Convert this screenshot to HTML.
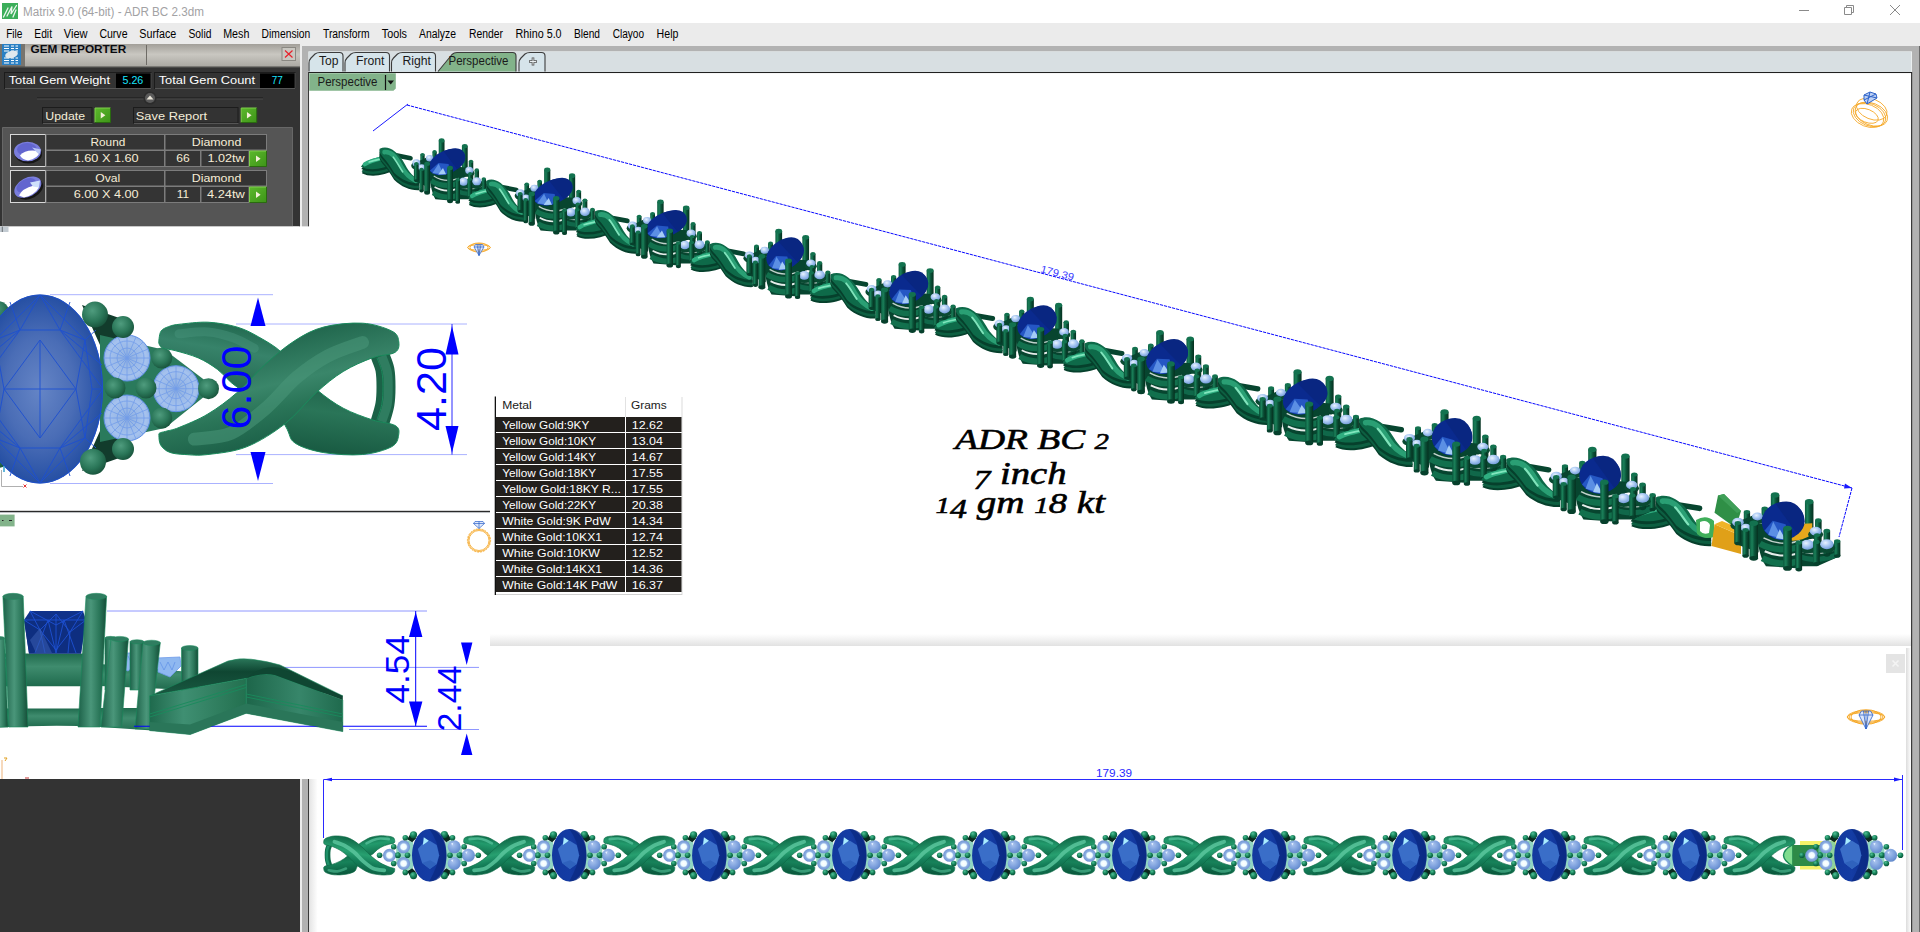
<!DOCTYPE html>
<html lang="en"><head><meta charset="utf-8"><title>Matrix 9.0 (64-bit) - ADR BC 2.3dm</title>
<style>html,body{margin:0;padding:0;background:#fff;overflow:hidden}body{width:1920px;height:932px;font-family:"Liberation Sans",sans-serif}svg{display:block}text{white-space:pre}</style></head><body>
<svg width="1920" height="932" viewBox="0 0 1920 932">
<defs>
<linearGradient id="hdr" x1="0" y1="0" x2="0" y2="1">
 <stop offset="0" stop-color="#a29f99"/><stop offset=".45" stop-color="#c9c7c1"/><stop offset="1" stop-color="#a9a7a1"/>
</linearGradient>
<linearGradient id="gbtn" x1="0" y1="0" x2="1" y2="1">
 <stop offset="0" stop-color="#5cb82c"/><stop offset="1" stop-color="#3d9418"/>
</linearGradient>

<linearGradient id="cyl" x1="0" y1="0" x2="1" y2="0">
 <stop offset="0" stop-color="#0b5a3e"/><stop offset=".3" stop-color="#1b8059"/><stop offset=".6" stop-color="#0a5238"/><stop offset="1" stop-color="#05301f"/>
</linearGradient>
<linearGradient id="band" x1="0" y1="0" x2="0" y2="1">
 <stop offset="0" stop-color="#0b5a3c"/><stop offset=".3" stop-color="#3aa67c"/><stop offset=".6" stop-color="#12704d"/><stop offset="1" stop-color="#08422c"/>
</linearGradient>
<radialGradient id="sst" cx=".4" cy=".35" r=".7">
 <stop offset="0" stop-color="#e8f2ff"/><stop offset=".5" stop-color="#a6c6f2"/><stop offset="1" stop-color="#6f97d6"/>
</radialGradient>
<radialGradient id="sstR" cx=".4" cy=".35" r=".7">
 <stop offset="0" stop-color="#a9c3ee"/><stop offset=".6" stop-color="#7b9fdc"/><stop offset="1" stop-color="#5f86c8"/>
</radialGradient>
<radialGradient id="sstL" cx=".5" cy=".5" r=".5">
 <stop offset="0" stop-color="#ffffff"/><stop offset=".42" stop-color="#eefcff"/><stop offset=".62" stop-color="#8fb0e4"/><stop offset="1" stop-color="#6f94d2"/>
</radialGradient>
<radialGradient id="ball" cx=".38" cy=".32" r=".7">
 <stop offset="0" stop-color="#4fc097"/><stop offset=".55" stop-color="#168058"/><stop offset="1" stop-color="#075236"/>
</radialGradient>
<linearGradient id="ovalT" x1="0" y1="0" x2="1" y2="0">
 <stop offset="0" stop-color="#12389e"/><stop offset=".5" stop-color="#143ca4"/><stop offset="1" stop-color="#0e3090"/>
</linearGradient>

<radialGradient id="bigoval" cx=".5" cy=".5" r=".62">
 <stop offset="0" stop-color="#6585c6"/><stop offset=".45" stop-color="#4a6db6"/><stop offset=".8" stop-color="#2650a4"/><stop offset="1" stop-color="#163f98"/>
</radialGradient>
<radialGradient id="dball" cx=".4" cy=".35" r=".75">
 <stop offset="0" stop-color="#4f9c7e"/><stop offset=".55" stop-color="#2a7658"/><stop offset="1" stop-color="#134a34"/>
</radialGradient>
<radialGradient id="dsst" cx=".5" cy=".5" r=".6">
 <stop offset="0" stop-color="#8fb0e0"/><stop offset=".7" stop-color="#a5c2ee"/><stop offset="1" stop-color="#86a8e0"/>
</radialGradient>
<linearGradient id="dband" x1="0" y1="0" x2="0" y2="1">
 <stop offset="0" stop-color="#1f6a4d"/><stop offset=".35" stop-color="#4b967a"/><stop offset=".7" stop-color="#2a7659"/><stop offset="1" stop-color="#175840"/>
</linearGradient>
<linearGradient id="dcyl" x1="0" y1="0" x2="1" y2="0">
 <stop offset="0" stop-color="#1c6148"/><stop offset=".45" stop-color="#4a967a"/><stop offset=".75" stop-color="#2a7659"/><stop offset="1" stop-color="#154c37"/>
</linearGradient>
<linearGradient id="dbar" x1="0" y1="0" x2="0" y2="1">
 <stop offset="0" stop-color="#1f6a4d"/><stop offset=".4" stop-color="#3f8c6e"/><stop offset="1" stop-color="#1f6a4d"/>
</linearGradient>
<linearGradient id="dband2" x1=".35" y1=".1" x2=".7" y2=".95">
 <stop offset="0" stop-color="#1d6249"/><stop offset=".42" stop-color="#3a866a"/><stop offset=".6" stop-color="#2a7558"/><stop offset="1" stop-color="#155640"/>
</linearGradient>
<linearGradient id="dbandA" x1=".6" y1="0" x2=".3" y2="1">
 <stop offset="0" stop-color="#1f664c"/><stop offset=".35" stop-color="#37836a"/><stop offset="1" stop-color="#1a5c44"/>
</linearGradient>
<linearGradient id="dbandB" x1=".6" y1="0" x2=".4" y2="1">
 <stop offset="0" stop-color="#1a5a43"/><stop offset=".5" stop-color="#2a7558"/><stop offset="1" stop-color="#175840"/>
</linearGradient>
<linearGradient id="vband2" x1=".35" y1=".1" x2=".7" y2=".95">
 <stop offset="0" stop-color="#0c5f40"/><stop offset=".42" stop-color="#27a070"/><stop offset=".6" stop-color="#15805a"/><stop offset="1" stop-color="#085238"/>
</linearGradient>
<linearGradient id="vbandA" x1=".6" y1="0" x2=".3" y2="1">
 <stop offset="0" stop-color="#0e6645"/><stop offset=".35" stop-color="#229a6c"/><stop offset="1" stop-color="#0a5a3c"/>
</linearGradient>
<linearGradient id="vbandB" x1=".6" y1="0" x2=".4" y2="1">
 <stop offset="0" stop-color="#0a5a3c"/><stop offset=".5" stop-color="#17825a"/><stop offset="1" stop-color="#085238"/>
</linearGradient>
<linearGradient id="dtop" x1="0" y1="0" x2="0" y2="1">
 <stop offset="0" stop-color="#2a7659"/><stop offset=".35" stop-color="#0f4632"/><stop offset="1" stop-color="#1a5a42"/>
</linearGradient>
<linearGradient id="dfaceL" x1="0" y1="0" x2="1" y2="0">
 <stop offset="0" stop-color="#1f6a4d"/><stop offset=".35" stop-color="#3f8f72"/><stop offset="1" stop-color="#23704f"/>
</linearGradient>
<linearGradient id="dfaceR" x1="0" y1="0" x2="1" y2="0">
 <stop offset="0" stop-color="#1d664a"/><stop offset=".55" stop-color="#37866a"/><stop offset="1" stop-color="#1f6a4d"/>
</linearGradient>
<linearGradient id="dlink" x1="0" y1="0" x2="1" y2="1">
 <stop offset="0" stop-color="#124a35"/><stop offset=".5" stop-color="#3a8a6c"/><stop offset="1" stop-color="#1f6a4d"/>
</linearGradient>

<g id="xring"><path d="M379.9 355.1 C380.7 357.5 383.9 364.2 384.9 369.5 C385.9 374.9 386.0 381.1 386.0 386.9 C386.0 392.7 385.9 398.4 384.9 404.3 C383.9 410.3 380.7 419.6 379.9 422.7" stroke="#1b6247" stroke-width="19" fill="none"/><path d="M381.8 356.0 C382.7 358.6 386.1 366.3 387.2 371.5 C388.3 376.6 388.2 381.5 388.2 386.9 C388.2 392.4 388.3 398.5 387.2 404.3 C386.1 410.1 382.7 418.8 381.8 421.7" stroke="#2f7d60" stroke-width="9" fill="none"/><path d="M377.0 357.9 C377.8 360.2 380.8 366.6 381.8 371.5 C382.8 376.3 383.0 381.5 383.0 386.9 C383.0 392.4 382.8 398.8 381.8 404.3 C380.8 409.8 377.8 417.2 377.0 419.8" stroke="#1a8a5c" stroke-width="1" fill="none"/></g><g id="xlink"><path d="M159.1 338.6 C159.4 336.4 159.7 332.9 161.2 330.9 C162.7 328.9 165.4 327.8 168.4 326.7 C171.3 325.6 172.4 325.1 179.0 324.3 C185.6 323.6 198.3 321.8 207.9 322.2 C217.6 322.7 228.6 324.6 236.9 327.0 C245.3 329.5 250.8 332.5 258.2 336.7 C265.6 340.9 274.9 346.0 281.4 352.2 C287.8 358.3 299.4 365.4 296.8 373.4 C294.2 381.5 275.9 398.2 265.9 400.4 C255.9 402.7 245.0 392.1 236.9 386.9 C228.9 381.8 224.0 374.4 217.6 369.5 C211.2 364.7 205.4 361.1 198.3 357.9 C191.2 354.8 180.9 352.2 175.1 350.6 C169.3 349.0 166.2 349.3 163.5 348.3 C160.9 347.3 160.0 346.0 159.3 344.4 C158.5 342.8 158.8 340.9 159.1 338.6 Z" fill="url(#dbandA)" stroke="#1a8a5c" stroke-width="1"/><path d="M258.2 381.1 C256.2 390.5 279.1 415.3 285.2 425.6 C291.3 435.9 288.4 438.4 294.9 442.9 C301.3 447.4 312.6 450.7 323.8 452.6 C335.1 454.5 351.2 455.5 362.5 454.5 C373.7 453.6 385.4 450.0 391.5 446.8 C397.5 443.6 398.0 438.8 398.6 435.2 C399.2 431.7 399.7 428.1 395.3 425.6 C390.9 423.0 380.8 422.7 372.1 419.8 C363.4 416.9 352.2 413.0 343.2 408.2 C334.1 403.3 325.8 397.2 318.1 390.8 C310.3 384.3 306.8 371.1 296.8 369.5 C286.8 367.9 260.1 371.8 258.2 381.1 Z" fill="url(#dbandB)" stroke="#1a8a5c" stroke-width="1"/><path d="M158.9 435.2 C159.0 437.2 158.9 442.0 160.6 444.9 C162.4 447.7 165.3 450.6 169.3 452.2 C173.3 453.8 178.3 454.1 184.8 454.5 C191.2 454.9 197.6 455.8 207.9 454.5 C218.3 453.2 233.7 452.0 246.6 446.8 C259.5 441.7 273.6 432.6 285.2 423.6 C296.8 414.6 306.5 401.4 316.1 392.7 C325.8 384.0 333.8 377.3 343.2 371.5 C352.5 365.7 363.4 361.2 372.1 357.9 C380.8 354.7 390.9 355.1 395.3 352.2 C399.7 349.3 399.2 344.1 398.6 340.6 C398.0 337.0 397.5 333.8 391.5 330.9 C385.4 328.0 373.7 323.8 362.5 323.2 C351.2 322.5 335.1 324.1 323.8 327.0 C312.6 329.9 304.5 334.4 294.9 340.6 C285.2 346.7 275.6 355.1 265.9 363.7 C256.2 372.4 246.6 384.3 236.9 392.7 C227.3 401.1 217.6 408.2 207.9 414.0 C198.3 419.8 186.1 424.6 179.0 427.5 C171.9 430.4 168.6 430.4 165.5 431.4 C162.3 432.3 161.1 432.3 160.0 432.9 C158.9 433.5 158.8 433.2 158.9 435.2 Z" fill="url(#dband2)" stroke="#1a8a5c" stroke-width="1"/><path d="M194.4 439.1 C200.5 438.1 219.2 438.4 231.1 433.3 C243.0 428.1 255.0 417.5 265.9 408.2 C276.8 398.8 286.5 386.0 296.8 377.3 C307.1 368.6 316.8 361.8 327.7 356.0 C338.7 350.2 356.7 344.7 362.5 342.5" stroke="#4a977a" stroke-width="13" fill="none" stroke-linecap="round" opacity="0.55"/><path d="M179.0 333.8 C183.8 333.5 198.9 331.2 207.9 331.9 C217.0 332.5 225.3 334.9 233.1 337.7 C240.8 340.4 250.8 346.5 254.3 348.3" stroke="#46917a" stroke-width="9" fill="none" stroke-linecap="round" opacity="0.5"/></g><g id="vring"><path d="M379.9 355.1 C380.7 357.5 383.9 364.2 384.9 369.5 C385.9 374.9 386.0 381.1 386.0 386.9 C386.0 392.7 385.9 398.4 384.9 404.3 C383.9 410.3 380.7 419.6 379.9 422.7" stroke="#0e6a48" stroke-width="19" fill="none"/><path d="M381.8 356.0 C382.7 358.6 386.1 366.3 387.2 371.5 C388.3 376.6 388.2 381.5 388.2 386.9 C388.2 392.4 388.3 398.5 387.2 404.3 C386.1 410.1 382.7 418.8 381.8 421.7" stroke="#1f9068" stroke-width="9" fill="none"/><path d="M377.0 357.9 C377.8 360.2 380.8 366.6 381.8 371.5 C382.8 376.3 383.0 381.5 383.0 386.9 C383.0 392.4 382.8 398.8 381.8 404.3 C380.8 409.8 377.8 417.2 377.0 419.8" stroke="#0c6a46" stroke-width="1" fill="none"/></g><g id="vlink"><path d="M159.1 338.6 C159.4 336.4 159.7 332.9 161.2 330.9 C162.7 328.9 165.4 327.8 168.4 326.7 C171.3 325.6 172.4 325.1 179.0 324.3 C185.6 323.6 198.3 321.8 207.9 322.2 C217.6 322.7 228.6 324.6 236.9 327.0 C245.3 329.5 250.8 332.5 258.2 336.7 C265.6 340.9 274.9 346.0 281.4 352.2 C287.8 358.3 299.4 365.4 296.8 373.4 C294.2 381.5 275.9 398.2 265.9 400.4 C255.9 402.7 245.0 392.1 236.9 386.9 C228.9 381.8 224.0 374.4 217.6 369.5 C211.2 364.7 205.4 361.1 198.3 357.9 C191.2 354.8 180.9 352.2 175.1 350.6 C169.3 349.0 166.2 349.3 163.5 348.3 C160.9 347.3 160.0 346.0 159.3 344.4 C158.5 342.8 158.8 340.9 159.1 338.6 Z" fill="url(#vbandA)" stroke="#0c6a46" stroke-width="2.2"/><path d="M258.2 381.1 C256.2 390.5 279.1 415.3 285.2 425.6 C291.3 435.9 288.4 438.4 294.9 442.9 C301.3 447.4 312.6 450.7 323.8 452.6 C335.1 454.5 351.2 455.5 362.5 454.5 C373.7 453.6 385.4 450.0 391.5 446.8 C397.5 443.6 398.0 438.8 398.6 435.2 C399.2 431.7 399.7 428.1 395.3 425.6 C390.9 423.0 380.8 422.7 372.1 419.8 C363.4 416.9 352.2 413.0 343.2 408.2 C334.1 403.3 325.8 397.2 318.1 390.8 C310.3 384.3 306.8 371.1 296.8 369.5 C286.8 367.9 260.1 371.8 258.2 381.1 Z" fill="url(#vbandB)" stroke="#0c6a46" stroke-width="2.2"/><path d="M158.9 435.2 C159.0 437.2 158.9 442.0 160.6 444.9 C162.4 447.7 165.3 450.6 169.3 452.2 C173.3 453.8 178.3 454.1 184.8 454.5 C191.2 454.9 197.6 455.8 207.9 454.5 C218.3 453.2 233.7 452.0 246.6 446.8 C259.5 441.7 273.6 432.6 285.2 423.6 C296.8 414.6 306.5 401.4 316.1 392.7 C325.8 384.0 333.8 377.3 343.2 371.5 C352.5 365.7 363.4 361.2 372.1 357.9 C380.8 354.7 390.9 355.1 395.3 352.2 C399.7 349.3 399.2 344.1 398.6 340.6 C398.0 337.0 397.5 333.8 391.5 330.9 C385.4 328.0 373.7 323.8 362.5 323.2 C351.2 322.5 335.1 324.1 323.8 327.0 C312.6 329.9 304.5 334.4 294.9 340.6 C285.2 346.7 275.6 355.1 265.9 363.7 C256.2 372.4 246.6 384.3 236.9 392.7 C227.3 401.1 217.6 408.2 207.9 414.0 C198.3 419.8 186.1 424.6 179.0 427.5 C171.9 430.4 168.6 430.4 165.5 431.4 C162.3 432.3 161.1 432.3 160.0 432.9 C158.9 433.5 158.8 433.2 158.9 435.2 Z" fill="url(#vband2)" stroke="#0c6a46" stroke-width="2.2"/><path d="M194.4 439.1 C200.5 438.1 219.2 438.4 231.1 433.3 C243.0 428.1 255.0 417.5 265.9 408.2 C276.8 398.8 286.5 386.0 296.8 377.3 C307.1 368.6 316.8 361.8 327.7 356.0 C338.7 350.2 356.7 344.7 362.5 342.5" stroke="#5ec8a0" stroke-width="13" fill="none" stroke-linecap="round" opacity="0.8"/><path d="M179.0 333.8 C183.8 333.5 198.9 331.2 207.9 331.9 C217.0 332.5 225.3 334.9 233.1 337.7 C240.8 340.4 250.8 346.5 254.3 348.3" stroke="#54bf98" stroke-width="9" fill="none" stroke-linecap="round" opacity="0.8"/><path d="M323.8 433.3 C328.7 434.9 343.2 442.0 352.8 442.9 C362.5 443.9 377.0 439.7 381.8 439.1" stroke="#54bf98" stroke-width="9" fill="none" stroke-linecap="round" opacity=".6"/></g><g id="plink"><path d="M64 26.5 L84 30" stroke="#07452f" stroke-width="5" fill="none" stroke-linecap="round"/><path d="M25.5 39 C29 32 45 29 62 25.5 L66 35 C52 41.5 36 44 25.5 39 Z" transform="translate(1 7)" fill="#06402c"/><path d="M25.5 39 C29 32 45 29 62 25.5 L66 35 C52 41.5 36 44 25.5 39 Z" transform="translate(.8 5.2)" fill="#0d5f41"/><path d="M25.5 39 C29 32 45 29 62 25.5 L66 35 C52 41.5 36 44 25.5 39 Z" transform="translate(.4 2.6)" fill="#06402c"/><path d="M25.5 39 C29 32 45 29 62 25.5 L66 35 C52 41.5 36 44 25.5 39 Z" fill="#0e6a49"/><path d="M30 36.5 C36 32.5 48 30.5 60 28" stroke="#2fae80" stroke-width="4.6" fill="none" stroke-linecap="round"/><path d="M35 34 C41 32 49 30.8 56 29.2" stroke="#8ff0c8" stroke-width="1.7" fill="none" stroke-linecap="round" opacity=".85"/><path d="M47.5 20 C56 16 68 20.5 77.5 37 C82 45 88 50.5 94 53.5 L94 56.5 C84 57 73.5 53.5 64.5 45.5 C60 39 56 33 51 28.5 C47.5 25 46.5 22 47.5 20 Z" transform="translate(0 7.5)" fill="#06402c"/><path d="M47.5 20 C56 16 68 20.5 77.5 37 C82 45 88 50.5 94 53.5 L94 56.5 C84 57 73.5 53.5 64.5 45.5 C60 39 56 33 51 28.5 C47.5 25 46.5 22 47.5 20 Z" transform="translate(0 5.5)" fill="#0d5f41"/><path d="M47.5 20 C56 16 68 20.5 77.5 37 C82 45 88 50.5 94 53.5 L94 56.5 C84 57 73.5 53.5 64.5 45.5 C60 39 56 33 51 28.5 C47.5 25 46.5 22 47.5 20 Z" transform="translate(0 2.8)" fill="#06402c"/><path d="M47.5 20 C56 16 68 20.5 77.5 37 C82 45 88 50.5 94 53.5 L94 56.5 C84 57 73.5 53.5 64.5 45.5 C60 39 56 33 51 28.5 C47.5 25 46.5 22 47.5 20 Z" fill="#0e6a49"/><path d="M53 23.5 C61 22.5 66.5 28 72.5 38.5 C77 46 83 51 90 54" stroke="#2a9f74" stroke-width="5" fill="none" stroke-linecap="round"/><path d="M63.5 29 C67.5 33.5 70.5 39 74.5 44.5" stroke="#8ff0c8" stroke-width="1.9" fill="none" stroke-linecap="round" opacity=".85"/></g><g id="pstf"><rect x="-10.0" y="-23" width="7" height="27" fill="url(#cyl)"/><ellipse cx="-6.5" cy="4" rx="3.5" ry="2.1" fill="#06402c"/><ellipse cx="-6.5" cy="-23" rx="3.5" ry="2.3800000000000003" fill="#13724f"/><rect x="18.0" y="-17" width="7" height="31" fill="url(#cyl)"/><ellipse cx="21.5" cy="14" rx="3.5" ry="2.1" fill="#06402c"/><ellipse cx="21.5" cy="-17" rx="3.5" ry="2.3800000000000003" fill="#13724f"/><rect x="-32.2" y="-8" width="5.2" height="30" fill="url(#cyl)"/><ellipse cx="-29.6" cy="22" rx="2.6" ry="1.56" fill="#06402c"/><ellipse cx="-29.6" cy="-8" rx="2.6" ry="1.7680000000000002" fill="#13724f"/><rect x="-17.6" y="-11" width="5.2" height="17" fill="url(#cyl)"/><ellipse cx="-15" cy="6" rx="2.6" ry="1.56" fill="#06402c"/><ellipse cx="-15" cy="-11" rx="2.6" ry="1.7680000000000002" fill="#13724f"/><path d="M-40 2 L-20 -7 L-20 28 L-40 20 Z" fill="#07452f"/><ellipse cx="-21" cy="-1" rx="5.800000000000001" ry="3.74" fill="#0a4a32"/><ellipse cx="-21" cy="-4" rx="4.4" ry="3.5200000000000005" fill="url(#sst)"/><ellipse cx="-37" cy="4" rx="6.199999999999999" ry="4.08" fill="#0a4a32"/><ellipse cx="-37" cy="1" rx="4.8" ry="3.84" fill="url(#sst)"/><ellipse cx="-30.5" cy="9" rx="5.800000000000001" ry="3.74" fill="#0a4a32"/><ellipse cx="-30.5" cy="6" rx="4.4" ry="3.5200000000000005" fill="url(#sst)"/><rect x="-39.6" y="1.7" width="5.2" height="18.3" fill="url(#cyl)"/><ellipse cx="-37" cy="20" rx="2.6" ry="1.56" fill="#06402c"/><ellipse cx="-37" cy="1.7" rx="2.6" ry="1.7680000000000002" fill="#13724f"/><path d="M-22 2 Q-21 30 -14 40 L14 42 Q20 32 22 6 Z" fill="#07452f"/><path d="M-19 20 Q-4 29 17 22" stroke="#12704d" stroke-width="5.5" fill="none"/><path d="M-17 33 Q-2 41 15 35" stroke="#12704d" stroke-width="5.5" fill="none"/><path d="M-15 26.8 Q-2 33.5 13 28.5" stroke="#ffffff" stroke-width="1.8" fill="none" opacity=".9"/><path d="M-16 15 Q-2 23 14 17.5" stroke="#ffffff" stroke-width="1.4" fill="none" opacity=".75"/><g transform="rotate(-20) scale(1.122 0.855)"><ellipse cx="0" cy="0" rx="20.5" ry="14.5" fill="#0a2a8e"/><path d="M0 -14.5 Q20.5 -14.5 20.5 0 Q20.5 10 8 13.5 L4 0 Z" fill="#092681"/><path d="M-20.2 2 Q-14 14.3 -1 14.5 L1 3 L-9 -3 Z" fill="#2557c4"/><path d="M-18.5 6 L-9 -2 L-7.5 12.5 Z" fill="#5b8fe4"/><path d="M-13 10.5 L-6 5 L-5 14 Z" fill="#a4ccf6"/></g><rect x="-33.3" y="8" width="5.2" height="23" fill="url(#cyl)"/><ellipse cx="-30.7" cy="31" rx="2.6" ry="1.56" fill="#06402c"/><ellipse cx="-30.7" cy="8" rx="2.6" ry="1.7680000000000002" fill="#13724f"/><rect x="-27.5" y="2" width="7" height="31" fill="url(#cyl)"/><ellipse cx="-24" cy="33" rx="3.5" ry="2.1" fill="#06402c"/><ellipse cx="-24" cy="2" rx="3.5" ry="2.3800000000000003" fill="#13724f"/><rect x="0.20000000000000018" y="6.5" width="7" height="35.5" fill="url(#cyl)"/><ellipse cx="3.7" cy="42" rx="3.5" ry="2.1" fill="#06402c"/><ellipse cx="3.7" cy="6.5" rx="3.5" ry="2.3800000000000003" fill="#13724f"/><path d="M10 22 L46 20 L47 31 L28 40 L10 40 Z" fill="#07452f"/><path d="M12 31 Q28 38 46 29" stroke="#10684a" stroke-width="4.5" fill="none"/><path d="M12 25.5 Q28 33 46 24" stroke="#ffffff" stroke-width="1.2" fill="none" opacity=".55"/><rect x="26.3" y="-0.5" width="5.4" height="24.5" fill="url(#cyl)"/><ellipse cx="29" cy="24" rx="2.7" ry="1.62" fill="#06402c"/><ellipse cx="29" cy="-0.5" rx="2.7" ry="1.8360000000000003" fill="#13724f"/><rect x="33.3" y="8.6" width="5.4" height="21.4" fill="url(#cyl)"/><ellipse cx="36" cy="30" rx="2.7" ry="1.62" fill="#06402c"/><ellipse cx="36" cy="8.6" rx="2.7" ry="1.8360000000000003" fill="#13724f"/><ellipse cx="26.8" cy="12" rx="6.199999999999999" ry="4.08" fill="#0a4a32"/><ellipse cx="26.8" cy="9" rx="4.8" ry="3.84" fill="url(#sst)"/><rect x="25.5" y="12.5" width="5" height="17.5" fill="url(#cyl)"/><ellipse cx="28" cy="30" rx="2.5" ry="1.5" fill="#06402c"/><ellipse cx="28" cy="12.5" rx="2.5" ry="1.7000000000000002" fill="#13724f"/><rect x="41.9" y="18" width="5.2" height="13" fill="url(#cyl)"/><ellipse cx="44.5" cy="31" rx="2.6" ry="1.56" fill="#06402c"/><ellipse cx="44.5" cy="18" rx="2.6" ry="1.7680000000000002" fill="#13724f"/><ellipse cx="20" cy="24" rx="6.9" ry="4.675" fill="#0a4a32"/><ellipse cx="20" cy="21" rx="5.5" ry="4.4" fill="url(#sst)"/><ellipse cx="36" cy="23.6" rx="6.9" ry="4.675" fill="#0a4a32"/><ellipse cx="36" cy="20.6" rx="5.5" ry="4.4" fill="url(#sst)"/><rect x="10.3" y="19" width="5.4" height="24" fill="url(#cyl)"/><ellipse cx="13" cy="43" rx="2.7" ry="1.62" fill="#06402c"/><ellipse cx="13" cy="19" rx="2.7" ry="1.8360000000000003" fill="#13724f"/><rect x="24.7" y="18.5" width="5.4" height="19.5" fill="url(#cyl)"/><ellipse cx="27.4" cy="38" rx="2.7" ry="1.62" fill="#06402c"/><ellipse cx="27.4" cy="18.5" rx="2.7" ry="1.8360000000000003" fill="#13724f"/></g><g id="pstm"><rect x="-10.0" y="-23" width="7" height="27" fill="url(#cyl)"/><ellipse cx="-6.5" cy="4" rx="3.5" ry="2.1" fill="#06402c"/><ellipse cx="-6.5" cy="-23" rx="3.5" ry="2.3800000000000003" fill="#13724f"/><rect x="18.0" y="-17" width="7" height="31" fill="url(#cyl)"/><ellipse cx="21.5" cy="14" rx="3.5" ry="2.1" fill="#06402c"/><ellipse cx="21.5" cy="-17" rx="3.5" ry="2.3800000000000003" fill="#13724f"/><rect x="-32.2" y="-8" width="5.2" height="30" fill="url(#cyl)"/><ellipse cx="-29.6" cy="22" rx="2.6" ry="1.56" fill="#06402c"/><ellipse cx="-29.6" cy="-8" rx="2.6" ry="1.7680000000000002" fill="#13724f"/><rect x="-17.6" y="-11" width="5.2" height="17" fill="url(#cyl)"/><ellipse cx="-15" cy="6" rx="2.6" ry="1.56" fill="#06402c"/><ellipse cx="-15" cy="-11" rx="2.6" ry="1.7680000000000002" fill="#13724f"/><path d="M-40 2 L-20 -7 L-20 28 L-40 20 Z" fill="#07452f"/><ellipse cx="-21" cy="-1" rx="5.800000000000001" ry="3.74" fill="#0a4a32"/><ellipse cx="-21" cy="-4" rx="4.4" ry="3.5200000000000005" fill="url(#sst)"/><ellipse cx="-37" cy="4" rx="6.199999999999999" ry="4.08" fill="#0a4a32"/><ellipse cx="-37" cy="1" rx="4.8" ry="3.84" fill="url(#sst)"/><ellipse cx="-30.5" cy="9" rx="5.800000000000001" ry="3.74" fill="#0a4a32"/><ellipse cx="-30.5" cy="6" rx="4.4" ry="3.5200000000000005" fill="url(#sst)"/><rect x="-39.6" y="1.7" width="5.2" height="18.3" fill="url(#cyl)"/><ellipse cx="-37" cy="20" rx="2.6" ry="1.56" fill="#06402c"/><ellipse cx="-37" cy="1.7" rx="2.6" ry="1.7680000000000002" fill="#13724f"/><path d="M-22 2 Q-21 30 -14 40 L14 42 Q20 32 22 6 Z" fill="#07452f"/><path d="M-19 20 Q-4 29 17 22" stroke="#12704d" stroke-width="5.5" fill="none"/><path d="M-17 33 Q-2 41 15 35" stroke="#12704d" stroke-width="5.5" fill="none"/><path d="M-15 26.8 Q-2 33.5 13 28.5" stroke="#ffffff" stroke-width="1.8" fill="none" opacity=".9"/><path d="M-16 15 Q-2 23 14 17.5" stroke="#ffffff" stroke-width="1.4" fill="none" opacity=".75"/><g transform="rotate(-28) scale(1.000 1.000)"><ellipse cx="0" cy="0" rx="20.5" ry="14.5" fill="#0a2a8e"/><path d="M0 -14.5 Q20.5 -14.5 20.5 0 Q20.5 10 8 13.5 L4 0 Z" fill="#092681"/><path d="M-20.2 2 Q-14 14.3 -1 14.5 L1 3 L-9 -3 Z" fill="#2557c4"/><path d="M-18.5 6 L-9 -2 L-7.5 12.5 Z" fill="#5b8fe4"/><path d="M-13 10.5 L-6 5 L-5 14 Z" fill="#a4ccf6"/></g><rect x="-33.3" y="8" width="5.2" height="23" fill="url(#cyl)"/><ellipse cx="-30.7" cy="31" rx="2.6" ry="1.56" fill="#06402c"/><ellipse cx="-30.7" cy="8" rx="2.6" ry="1.7680000000000002" fill="#13724f"/><rect x="-27.5" y="2" width="7" height="31" fill="url(#cyl)"/><ellipse cx="-24" cy="33" rx="3.5" ry="2.1" fill="#06402c"/><ellipse cx="-24" cy="2" rx="3.5" ry="2.3800000000000003" fill="#13724f"/><rect x="0.20000000000000018" y="6.5" width="7" height="35.5" fill="url(#cyl)"/><ellipse cx="3.7" cy="42" rx="3.5" ry="2.1" fill="#06402c"/><ellipse cx="3.7" cy="6.5" rx="3.5" ry="2.3800000000000003" fill="#13724f"/><path d="M10 22 L46 20 L47 31 L28 40 L10 40 Z" fill="#07452f"/><path d="M12 31 Q28 38 46 29" stroke="#10684a" stroke-width="4.5" fill="none"/><path d="M12 25.5 Q28 33 46 24" stroke="#ffffff" stroke-width="1.2" fill="none" opacity=".55"/><rect x="26.3" y="-0.5" width="5.4" height="24.5" fill="url(#cyl)"/><ellipse cx="29" cy="24" rx="2.7" ry="1.62" fill="#06402c"/><ellipse cx="29" cy="-0.5" rx="2.7" ry="1.8360000000000003" fill="#13724f"/><rect x="33.3" y="8.6" width="5.4" height="21.4" fill="url(#cyl)"/><ellipse cx="36" cy="30" rx="2.7" ry="1.62" fill="#06402c"/><ellipse cx="36" cy="8.6" rx="2.7" ry="1.8360000000000003" fill="#13724f"/><ellipse cx="26.8" cy="12" rx="6.199999999999999" ry="4.08" fill="#0a4a32"/><ellipse cx="26.8" cy="9" rx="4.8" ry="3.84" fill="url(#sst)"/><rect x="25.5" y="12.5" width="5" height="17.5" fill="url(#cyl)"/><ellipse cx="28" cy="30" rx="2.5" ry="1.5" fill="#06402c"/><ellipse cx="28" cy="12.5" rx="2.5" ry="1.7000000000000002" fill="#13724f"/><rect x="41.9" y="18" width="5.2" height="13" fill="url(#cyl)"/><ellipse cx="44.5" cy="31" rx="2.6" ry="1.56" fill="#06402c"/><ellipse cx="44.5" cy="18" rx="2.6" ry="1.7680000000000002" fill="#13724f"/><ellipse cx="20" cy="24" rx="6.9" ry="4.675" fill="#0a4a32"/><ellipse cx="20" cy="21" rx="5.5" ry="4.4" fill="url(#sst)"/><ellipse cx="36" cy="23.6" rx="6.9" ry="4.675" fill="#0a4a32"/><ellipse cx="36" cy="20.6" rx="5.5" ry="4.4" fill="url(#sst)"/><rect x="10.3" y="19" width="5.4" height="24" fill="url(#cyl)"/><ellipse cx="13" cy="43" rx="2.7" ry="1.62" fill="#06402c"/><ellipse cx="13" cy="19" rx="2.7" ry="1.8360000000000003" fill="#13724f"/><rect x="24.7" y="18.5" width="5.4" height="19.5" fill="url(#cyl)"/><ellipse cx="27.4" cy="38" rx="2.7" ry="1.62" fill="#06402c"/><ellipse cx="27.4" cy="18.5" rx="2.7" ry="1.8360000000000003" fill="#13724f"/></g><g id="pstn"><rect x="-10.0" y="-23" width="7" height="27" fill="url(#cyl)"/><ellipse cx="-6.5" cy="4" rx="3.5" ry="2.1" fill="#06402c"/><ellipse cx="-6.5" cy="-23" rx="3.5" ry="2.3800000000000003" fill="#13724f"/><rect x="18.0" y="-17" width="7" height="31" fill="url(#cyl)"/><ellipse cx="21.5" cy="14" rx="3.5" ry="2.1" fill="#06402c"/><ellipse cx="21.5" cy="-17" rx="3.5" ry="2.3800000000000003" fill="#13724f"/><rect x="-32.2" y="-8" width="5.2" height="30" fill="url(#cyl)"/><ellipse cx="-29.6" cy="22" rx="2.6" ry="1.56" fill="#06402c"/><ellipse cx="-29.6" cy="-8" rx="2.6" ry="1.7680000000000002" fill="#13724f"/><rect x="-17.6" y="-11" width="5.2" height="17" fill="url(#cyl)"/><ellipse cx="-15" cy="6" rx="2.6" ry="1.56" fill="#06402c"/><ellipse cx="-15" cy="-11" rx="2.6" ry="1.7680000000000002" fill="#13724f"/><path d="M-40 2 L-20 -7 L-20 28 L-40 20 Z" fill="#07452f"/><ellipse cx="-21" cy="-1" rx="5.800000000000001" ry="3.74" fill="#0a4a32"/><ellipse cx="-21" cy="-4" rx="4.4" ry="3.5200000000000005" fill="url(#sst)"/><ellipse cx="-37" cy="4" rx="6.199999999999999" ry="4.08" fill="#0a4a32"/><ellipse cx="-37" cy="1" rx="4.8" ry="3.84" fill="url(#sst)"/><ellipse cx="-30.5" cy="9" rx="5.800000000000001" ry="3.74" fill="#0a4a32"/><ellipse cx="-30.5" cy="6" rx="4.4" ry="3.5200000000000005" fill="url(#sst)"/><rect x="-39.6" y="1.7" width="5.2" height="18.3" fill="url(#cyl)"/><ellipse cx="-37" cy="20" rx="2.6" ry="1.56" fill="#06402c"/><ellipse cx="-37" cy="1.7" rx="2.6" ry="1.7680000000000002" fill="#13724f"/><path d="M-22 2 Q-21 30 -14 40 L14 42 Q20 32 22 6 Z" fill="#07452f"/><path d="M-19 20 Q-4 29 17 22" stroke="#12704d" stroke-width="5.5" fill="none"/><path d="M-17 33 Q-2 41 15 35" stroke="#12704d" stroke-width="5.5" fill="none"/><path d="M-15 26.8 Q-2 33.5 13 28.5" stroke="#ffffff" stroke-width="1.8" fill="none" opacity=".9"/><path d="M-16 15 Q-2 23 14 17.5" stroke="#ffffff" stroke-width="1.4" fill="none" opacity=".75"/><g transform="rotate(-22) scale(0.859 1.145)"><ellipse cx="0" cy="0" rx="20.5" ry="14.5" fill="#0a2a8e"/><path d="M0 -14.5 Q20.5 -14.5 20.5 0 Q20.5 10 8 13.5 L4 0 Z" fill="#092681"/><path d="M-20.2 2 Q-14 14.3 -1 14.5 L1 3 L-9 -3 Z" fill="#2557c4"/><path d="M-18.5 6 L-9 -2 L-7.5 12.5 Z" fill="#5b8fe4"/><path d="M-13 10.5 L-6 5 L-5 14 Z" fill="#a4ccf6"/></g><rect x="-33.3" y="8" width="5.2" height="23" fill="url(#cyl)"/><ellipse cx="-30.7" cy="31" rx="2.6" ry="1.56" fill="#06402c"/><ellipse cx="-30.7" cy="8" rx="2.6" ry="1.7680000000000002" fill="#13724f"/><rect x="-27.5" y="2" width="7" height="31" fill="url(#cyl)"/><ellipse cx="-24" cy="33" rx="3.5" ry="2.1" fill="#06402c"/><ellipse cx="-24" cy="2" rx="3.5" ry="2.3800000000000003" fill="#13724f"/><rect x="0.20000000000000018" y="6.5" width="7" height="35.5" fill="url(#cyl)"/><ellipse cx="3.7" cy="42" rx="3.5" ry="2.1" fill="#06402c"/><ellipse cx="3.7" cy="6.5" rx="3.5" ry="2.3800000000000003" fill="#13724f"/><path d="M10 22 L46 20 L47 31 L28 40 L10 40 Z" fill="#07452f"/><path d="M12 31 Q28 38 46 29" stroke="#10684a" stroke-width="4.5" fill="none"/><path d="M12 25.5 Q28 33 46 24" stroke="#ffffff" stroke-width="1.2" fill="none" opacity=".55"/><rect x="26.3" y="-0.5" width="5.4" height="24.5" fill="url(#cyl)"/><ellipse cx="29" cy="24" rx="2.7" ry="1.62" fill="#06402c"/><ellipse cx="29" cy="-0.5" rx="2.7" ry="1.8360000000000003" fill="#13724f"/><rect x="33.3" y="8.6" width="5.4" height="21.4" fill="url(#cyl)"/><ellipse cx="36" cy="30" rx="2.7" ry="1.62" fill="#06402c"/><ellipse cx="36" cy="8.6" rx="2.7" ry="1.8360000000000003" fill="#13724f"/><ellipse cx="26.8" cy="12" rx="6.199999999999999" ry="4.08" fill="#0a4a32"/><ellipse cx="26.8" cy="9" rx="4.8" ry="3.84" fill="url(#sst)"/><rect x="25.5" y="12.5" width="5" height="17.5" fill="url(#cyl)"/><ellipse cx="28" cy="30" rx="2.5" ry="1.5" fill="#06402c"/><ellipse cx="28" cy="12.5" rx="2.5" ry="1.7000000000000002" fill="#13724f"/><rect x="41.9" y="18" width="5.2" height="13" fill="url(#cyl)"/><ellipse cx="44.5" cy="31" rx="2.6" ry="1.56" fill="#06402c"/><ellipse cx="44.5" cy="18" rx="2.6" ry="1.7680000000000002" fill="#13724f"/><ellipse cx="20" cy="24" rx="6.9" ry="4.675" fill="#0a4a32"/><ellipse cx="20" cy="21" rx="5.5" ry="4.4" fill="url(#sst)"/><ellipse cx="36" cy="23.6" rx="6.9" ry="4.675" fill="#0a4a32"/><ellipse cx="36" cy="20.6" rx="5.5" ry="4.4" fill="url(#sst)"/><rect x="10.3" y="19" width="5.4" height="24" fill="url(#cyl)"/><ellipse cx="13" cy="43" rx="2.7" ry="1.62" fill="#06402c"/><ellipse cx="13" cy="19" rx="2.7" ry="1.8360000000000003" fill="#13724f"/><rect x="24.7" y="18.5" width="5.4" height="19.5" fill="url(#cyl)"/><ellipse cx="27.4" cy="38" rx="2.7" ry="1.62" fill="#06402c"/><ellipse cx="27.4" cy="18.5" rx="2.7" ry="1.8360000000000003" fill="#13724f"/></g><g id="pstc"><rect x="-10.0" y="-23" width="7" height="27" fill="url(#cyl)"/><ellipse cx="-6.5" cy="4" rx="3.5" ry="2.1" fill="#06402c"/><ellipse cx="-6.5" cy="-23" rx="3.5" ry="2.3800000000000003" fill="#13724f"/><rect x="18.0" y="-17" width="7" height="31" fill="url(#cyl)"/><ellipse cx="21.5" cy="14" rx="3.5" ry="2.1" fill="#06402c"/><ellipse cx="21.5" cy="-17" rx="3.5" ry="2.3800000000000003" fill="#13724f"/><rect x="-32.2" y="-8" width="5.2" height="30" fill="url(#cyl)"/><ellipse cx="-29.6" cy="22" rx="2.6" ry="1.56" fill="#06402c"/><ellipse cx="-29.6" cy="-8" rx="2.6" ry="1.7680000000000002" fill="#13724f"/><rect x="-17.6" y="-11" width="5.2" height="17" fill="url(#cyl)"/><ellipse cx="-15" cy="6" rx="2.6" ry="1.56" fill="#06402c"/><ellipse cx="-15" cy="-11" rx="2.6" ry="1.7680000000000002" fill="#13724f"/><path d="M-40 2 L-20 -7 L-20 28 L-40 20 Z" fill="#07452f"/><ellipse cx="-21" cy="-1" rx="5.800000000000001" ry="3.74" fill="#0a4a32"/><ellipse cx="-21" cy="-4" rx="4.4" ry="3.5200000000000005" fill="url(#sst)"/><ellipse cx="-37" cy="4" rx="6.199999999999999" ry="4.08" fill="#0a4a32"/><ellipse cx="-37" cy="1" rx="4.8" ry="3.84" fill="url(#sst)"/><ellipse cx="-30.5" cy="9" rx="5.800000000000001" ry="3.74" fill="#0a4a32"/><ellipse cx="-30.5" cy="6" rx="4.4" ry="3.5200000000000005" fill="url(#sst)"/><rect x="-39.6" y="1.7" width="5.2" height="18.3" fill="url(#cyl)"/><ellipse cx="-37" cy="20" rx="2.6" ry="1.56" fill="#06402c"/><ellipse cx="-37" cy="1.7" rx="2.6" ry="1.7680000000000002" fill="#13724f"/><path d="M-22 2 Q-21 30 -14 40 L14 42 Q20 32 22 6 Z" fill="#07452f"/><path d="M-19 20 Q-4 29 17 22" stroke="#12704d" stroke-width="5.5" fill="none"/><path d="M-17 33 Q-2 41 15 35" stroke="#12704d" stroke-width="5.5" fill="none"/><path d="M-15 26.8 Q-2 33.5 13 28.5" stroke="#ffffff" stroke-width="1.8" fill="none" opacity=".9"/><path d="M-16 15 Q-2 23 14 17.5" stroke="#ffffff" stroke-width="1.4" fill="none" opacity=".75"/><path d="M-8 10 Q6 24 24 12 L24 2 L-8 4 Z" fill="#e7a81c"/><g transform="rotate(-22) scale(0.859 1.145)"><ellipse cx="0" cy="0" rx="20.5" ry="14.5" fill="#0a2a8e"/><path d="M0 -14.5 Q20.5 -14.5 20.5 0 Q20.5 10 8 13.5 L4 0 Z" fill="#092681"/><path d="M-20.2 2 Q-14 14.3 -1 14.5 L1 3 L-9 -3 Z" fill="#2557c4"/><path d="M-18.5 6 L-9 -2 L-7.5 12.5 Z" fill="#5b8fe4"/><path d="M-13 10.5 L-6 5 L-5 14 Z" fill="#a4ccf6"/></g><rect x="-33.3" y="8" width="5.2" height="23" fill="url(#cyl)"/><ellipse cx="-30.7" cy="31" rx="2.6" ry="1.56" fill="#06402c"/><ellipse cx="-30.7" cy="8" rx="2.6" ry="1.7680000000000002" fill="#13724f"/><rect x="-27.5" y="2" width="7" height="31" fill="url(#cyl)"/><ellipse cx="-24" cy="33" rx="3.5" ry="2.1" fill="#06402c"/><ellipse cx="-24" cy="2" rx="3.5" ry="2.3800000000000003" fill="#13724f"/><rect x="0.20000000000000018" y="6.5" width="7" height="35.5" fill="url(#cyl)"/><ellipse cx="3.7" cy="42" rx="3.5" ry="2.1" fill="#06402c"/><ellipse cx="3.7" cy="6.5" rx="3.5" ry="2.3800000000000003" fill="#13724f"/><path d="M10 22 L46 20 L47 31 L28 40 L10 40 Z" fill="#07452f"/><path d="M12 31 Q28 38 46 29" stroke="#10684a" stroke-width="4.5" fill="none"/><path d="M12 25.5 Q28 33 46 24" stroke="#ffffff" stroke-width="1.2" fill="none" opacity=".55"/><rect x="26.3" y="-0.5" width="5.4" height="24.5" fill="url(#cyl)"/><ellipse cx="29" cy="24" rx="2.7" ry="1.62" fill="#06402c"/><ellipse cx="29" cy="-0.5" rx="2.7" ry="1.8360000000000003" fill="#13724f"/><rect x="33.3" y="8.6" width="5.4" height="21.4" fill="url(#cyl)"/><ellipse cx="36" cy="30" rx="2.7" ry="1.62" fill="#06402c"/><ellipse cx="36" cy="8.6" rx="2.7" ry="1.8360000000000003" fill="#13724f"/><ellipse cx="26.8" cy="12" rx="6.199999999999999" ry="4.08" fill="#0a4a32"/><ellipse cx="26.8" cy="9" rx="4.8" ry="3.84" fill="url(#sst)"/><rect x="25.5" y="12.5" width="5" height="17.5" fill="url(#cyl)"/><ellipse cx="28" cy="30" rx="2.5" ry="1.5" fill="#06402c"/><ellipse cx="28" cy="12.5" rx="2.5" ry="1.7000000000000002" fill="#13724f"/><rect x="41.9" y="18" width="5.2" height="13" fill="url(#cyl)"/><ellipse cx="44.5" cy="31" rx="2.6" ry="1.56" fill="#06402c"/><ellipse cx="44.5" cy="18" rx="2.6" ry="1.7680000000000002" fill="#13724f"/><ellipse cx="20" cy="24" rx="6.9" ry="4.675" fill="#0a4a32"/><ellipse cx="20" cy="21" rx="5.5" ry="4.4" fill="url(#sst)"/><ellipse cx="36" cy="23.6" rx="6.9" ry="4.675" fill="#0a4a32"/><ellipse cx="36" cy="20.6" rx="5.5" ry="4.4" fill="url(#sst)"/><rect x="10.3" y="19" width="5.4" height="24" fill="url(#cyl)"/><ellipse cx="13" cy="43" rx="2.7" ry="1.62" fill="#06402c"/><ellipse cx="13" cy="19" rx="2.7" ry="1.8360000000000003" fill="#13724f"/><rect x="24.7" y="18.5" width="5.4" height="19.5" fill="url(#cyl)"/><ellipse cx="27.4" cy="38" rx="2.7" ry="1.62" fill="#06402c"/><ellipse cx="27.4" cy="18.5" rx="2.7" ry="1.8360000000000003" fill="#13724f"/></g><g id="tlink"><g transform="scale(0.296 0.296) translate(-279 -388.5)"><use href="#vlink"/></g></g><g id="tlinkr"><g transform="scale(-0.296 0.296) translate(-279 -388.5)"><use href="#vring"/><use href="#vlink"/></g></g><g id="tst"><path d="M-16 -13 L-22 -15 L-33 -8 L-33 8 L-22 15 L-16 13 Z M16 -13 L22 -15 L33 -8 L33 8 L22 15 L16 13 Z" fill="#6cc8ae" opacity=".75"/><path d="M-30 -3 L-47 0 L-30 3 Z M30 -3 L47 0 L30 3 Z" fill="#178058"/><path d="M-19 -21 L-13 -17 L-17 -13 L-22 -16 Z M-19 21 L-13 17 L-17 13 L-22 16 Z M19 -21 L13 -17 L17 -13 L22 -16 Z M19 21 L13 17 L17 13 L22 16 Z" fill="#0a2a1e"/><circle cx="-25.6" cy="-8.5" r="6.5" fill="url(#sstL)"/><circle cx="-25.6" cy="8.2" r="6.5" fill="url(#sstL)"/><circle cx="-39.7" cy="0" r="6.5" fill="url(#sstL)"/><circle cx="25" cy="-8.5" r="6.5" fill="url(#sstR)"/><path d="M21.8 -11.9 l2.4 -.6 l-1 2.6 z" fill="#e4efff"/><circle cx="25" cy="8.2" r="6.5" fill="url(#sstR)"/><path d="M21.8 4.799999999999999 l2.4 -.6 l-1 2.6 z" fill="#e4efff"/><circle cx="39.2" cy="0" r="6.5" fill="url(#sstR)"/><path d="M36.0 -3.4 l2.4 -.6 l-1 2.6 z" fill="#e4efff"/><circle cx="-15.7" cy="-20.5" r="3.6" fill="url(#ball)"/><circle cx="15.2" cy="-20.7" r="3.6" fill="url(#ball)"/><circle cx="-15.7" cy="20.3" r="3.6" fill="url(#ball)"/><circle cx="15.2" cy="20.3" r="3.6" fill="url(#ball)"/><circle cx="-23.9" cy="-17.5" r="2.8" fill="url(#ball)"/><circle cx="23.3" cy="-17.5" r="2.8" fill="url(#ball)"/><circle cx="-23.9" cy="17.1" r="2.8" fill="url(#ball)"/><circle cx="23.3" cy="17.1" r="2.8" fill="url(#ball)"/><circle cx="-35.5" cy="-8.5" r="2.8" fill="url(#ball)"/><circle cx="-35.5" cy="8.2" r="2.8" fill="url(#ball)"/><circle cx="-31.2" cy="0" r="2.8" fill="url(#ball)"/><circle cx="-21.7" cy="0" r="2.8" fill="url(#ball)"/><circle cx="-49.6" cy="0" r="2.8" fill="url(#ball)"/><circle cx="20.8" cy="0" r="2.8" fill="url(#ball)"/><circle cx="30.2" cy="0" r="2.8" fill="url(#ball)"/><circle cx="35" cy="-8.5" r="2.8" fill="url(#ball)"/><circle cx="35" cy="8.2" r="2.8" fill="url(#ball)"/><circle cx="49.1" cy="0" r="2.8" fill="url(#ball)"/><ellipse cx="0" cy="0" rx="17.2" ry="26.2" fill="url(#ovalT)"/><path d="M0 -26.2 Q17.2 -26.2 17.2 0 Q17.2 26.2 0 26.2 Q9 10 10 0 Q9 -14 0 -26.2 Z" fill="#0b2a82" opacity=".75"/><path d="M-11.4 -6.4 L-6.3 -12 L0.6 -14.5 L7.5 -10.2 L10 0 L7.5 8.7 L0.6 13.8 L-7.1 7.8 Z" fill="#3a6ec8"/><path d="M-7.1 7.8 L0.6 13.8 L7.5 8.7 L1 5 Z" fill="#2f62bd"/><path d="M-5.4 -18 L-0.3 -14.5 L-6.3 -10.2 Z" fill="#a8ecff"/></g>
<linearGradient id="shT" x1="0" y1="0" x2="0" y2="1"><stop offset="0" stop-color="#ffffff"/><stop offset="1" stop-color="#e2e2e2"/></linearGradient>
<linearGradient id="shR" x1="0" y1="0" x2="1" y2="0"><stop offset="0" stop-color="#dcdcdc"/><stop offset="1" stop-color="#ffffff"/></linearGradient>
</defs>
<rect x="0" y="0" width="1920" height="932" fill="#ffffff" />
<g id="titlebar">
<rect x="0" y="0" width="1920" height="23" fill="#ffffff" />
<rect x="2" y="3" width="16" height="16" fill="#3cae5a" />
<path d="M3.5 17 L8 8 M7 16 L12 6.5 L11 14 L16.5 5.5 M13 17 L16 10" stroke="#fff" stroke-width="1.3" fill="none" stroke-linecap="round" opacity=".9"/>
<text x="23" y="16" font-family="Liberation Sans, sans-serif" font-size="12.5" font-weight="normal" font-style="normal" fill="#a2a2a4" textLength="181.0" lengthAdjust="spacingAndGlyphs" >Matrix 9.0 (64-bit) - ADR BC 2.3dm</text>
<g stroke="#8a8a8a" stroke-width="1" fill="none">
<path d="M1799 10.5 H1809"/>
<path d="M1844.5 7.5 h7 v7 h-7 z M1846.5 7.5 v-2 h7 v7 h-2"/>
<path d="M1890 5 L1900 15 M1900 5 L1890 15"/>
</g></g>
<g id="menubar">
<rect x="0" y="23" width="1920" height="23" fill="#ebebeb" />
<text x="6.2" y="38" font-family="Liberation Sans, sans-serif" font-size="12" font-weight="normal" font-style="normal" fill="#000" textLength="16.3" lengthAdjust="spacingAndGlyphs" >File</text>
<text x="34.3" y="38" font-family="Liberation Sans, sans-serif" font-size="12" font-weight="normal" font-style="normal" fill="#000" textLength="17.7" lengthAdjust="spacingAndGlyphs" >Edit</text>
<text x="63.8" y="38" font-family="Liberation Sans, sans-serif" font-size="12" font-weight="normal" font-style="normal" fill="#000" textLength="23.8" lengthAdjust="spacingAndGlyphs" >View</text>
<text x="99.4" y="38" font-family="Liberation Sans, sans-serif" font-size="12" font-weight="normal" font-style="normal" fill="#000" textLength="28.1" lengthAdjust="spacingAndGlyphs" >Curve</text>
<text x="139.3" y="38" font-family="Liberation Sans, sans-serif" font-size="12" font-weight="normal" font-style="normal" fill="#000" textLength="37.0" lengthAdjust="spacingAndGlyphs" >Surface</text>
<text x="188.5" y="38" font-family="Liberation Sans, sans-serif" font-size="12" font-weight="normal" font-style="normal" fill="#000" textLength="22.9" lengthAdjust="spacingAndGlyphs" >Solid</text>
<text x="223.2" y="38" font-family="Liberation Sans, sans-serif" font-size="12" font-weight="normal" font-style="normal" fill="#000" textLength="26.2" lengthAdjust="spacingAndGlyphs" >Mesh</text>
<text x="261.6" y="38" font-family="Liberation Sans, sans-serif" font-size="12" font-weight="normal" font-style="normal" fill="#000" textLength="48.7" lengthAdjust="spacingAndGlyphs" >Dimension</text>
<text x="323" y="38" font-family="Liberation Sans, sans-serif" font-size="12" font-weight="normal" font-style="normal" fill="#000" textLength="46.5" lengthAdjust="spacingAndGlyphs" >Transform</text>
<text x="381.8" y="38" font-family="Liberation Sans, sans-serif" font-size="12" font-weight="normal" font-style="normal" fill="#000" textLength="25.2" lengthAdjust="spacingAndGlyphs" >Tools</text>
<text x="419" y="38" font-family="Liberation Sans, sans-serif" font-size="12" font-weight="normal" font-style="normal" fill="#000" textLength="37.0" lengthAdjust="spacingAndGlyphs" >Analyze</text>
<text x="469" y="38" font-family="Liberation Sans, sans-serif" font-size="12" font-weight="normal" font-style="normal" fill="#000" textLength="34.0" lengthAdjust="spacingAndGlyphs" >Render</text>
<text x="515.6" y="38" font-family="Liberation Sans, sans-serif" font-size="12" font-weight="normal" font-style="normal" fill="#000" textLength="46.0" lengthAdjust="spacingAndGlyphs" >Rhino 5.0</text>
<text x="574" y="38" font-family="Liberation Sans, sans-serif" font-size="12" font-weight="normal" font-style="normal" fill="#000" textLength="26.0" lengthAdjust="spacingAndGlyphs" >Blend</text>
<text x="612.7" y="38" font-family="Liberation Sans, sans-serif" font-size="12" font-weight="normal" font-style="normal" fill="#000" textLength="31.3" lengthAdjust="spacingAndGlyphs" >Clayoo</text>
<text x="656.6" y="38" font-family="Liberation Sans, sans-serif" font-size="12" font-weight="normal" font-style="normal" fill="#000" textLength="21.8" lengthAdjust="spacingAndGlyphs" >Help</text>
</g>
<g id="viewport-frame">
<rect x="299" y="46" width="1" height="886" fill="#2a2a2a" />
<rect x="300" y="46" width="2" height="886" fill="#ececec" />
<rect x="302" y="46" width="1618" height="5.5" fill="#b2b2b2" />
<rect x="302" y="46" width="6.5" height="886" fill="#b2b2b2" />
<rect x="1912" y="46" width="8" height="886" fill="#b2b2b2" />
<rect x="1911" y="72" width="1.2" height="860" fill="#3a3a3a" />
<rect x="1919" y="46" width="1" height="886" fill="#6a6a6a" />
<rect x="308.5" y="51.5" width="1603" height="20.5" fill="#d8dfe2" />
<rect x="308" y="72" width="1604" height="1.2" fill="#202020" />
<rect x="308" y="72" width="1.2" height="860" fill="#3a3a3a" />
<rect x="309.2" y="73.2" width="1601.8" height="859" fill="#ffffff" />
<path d="M309 71.5 V63 Q309 60 311 58 L315 54 Q317 52.5 320 52.5 H339.5 Q343.0 52.5 343.0 56 V71.5 Z" fill="#d6e4ea"/><path d="M309 71.5 V63 Q309 60 311 58 L315 54 Q317 52.5 320 52.5 H339.5 Q343.0 52.5 343.0 56 V71.5" fill="none" stroke="#3c3c3c" stroke-width="1.1"/><text x="319" y="65.3" font-family="Liberation Sans, sans-serif" font-size="12.8" font-weight="normal" font-style="normal" fill="#1a1a1a" textLength="19.5" lengthAdjust="spacingAndGlyphs" >Top</text>
<path d="M345 71.5 V63 Q345 60 347 58 L351 54 Q353 52.5 356 52.5 H386 Q389.5 52.5 389.5 56 V71.5 Z" fill="#d6e4ea"/><path d="M345 71.5 V63 Q345 60 347 58 L351 54 Q353 52.5 356 52.5 H386 Q389.5 52.5 389.5 56 V71.5" fill="none" stroke="#3c3c3c" stroke-width="1.1"/><text x="356" y="65.3" font-family="Liberation Sans, sans-serif" font-size="12.8" font-weight="normal" font-style="normal" fill="#1a1a1a" textLength="28.5" lengthAdjust="spacingAndGlyphs" >Front</text>
<path d="M391.5 71.5 V63 Q391.5 60 393.5 58 L397.5 54 Q399.5 52.5 402.5 52.5 H432 Q435.5 52.5 435.5 56 V71.5 Z" fill="#d6e4ea"/><path d="M391.5 71.5 V63 Q391.5 60 393.5 58 L397.5 54 Q399.5 52.5 402.5 52.5 H432 Q435.5 52.5 435.5 56 V71.5" fill="none" stroke="#3c3c3c" stroke-width="1.1"/><text x="402.5" y="65.3" font-family="Liberation Sans, sans-serif" font-size="12.8" font-weight="normal" font-style="normal" fill="#1a1a1a" textLength="28.5" lengthAdjust="spacingAndGlyphs" >Right</text>
<path d="M519 71.5 V63 Q519 60 521 58 L525 54 Q527 52.5 530 52.5 H541.5 Q545.0 52.5 545.0 56 V71.5 Z" fill="#d6e4ea"/><path d="M519 71.5 V63 Q519 60 521 58 L525 54 Q527 52.5 530 52.5 H541.5 Q545.0 52.5 545.0 56 V71.5" fill="none" stroke="#3c3c3c" stroke-width="1.1"/><text x="0" y="65.3" font-family="Liberation Sans, sans-serif" font-size="12.8" font-weight="normal" font-style="normal" fill="#1a1a1a" textLength="1.0" lengthAdjust="spacingAndGlyphs" ></text>
<path d="M438 71.5 L452 54.5 Q454 52.5 457 52.5 H512.5 Q516.0 52.5 516.0 56 V71.5 Z" fill="#82b38a"/><path d="M438 71.5 L452 54.5 Q454 52.5 457 52.5 H512.5 Q516.0 52.5 516.0 56 V71.5" fill="none" stroke="#3c3c3c" stroke-width="1.1"/><text x="448.5" y="65.3" font-family="Liberation Sans, sans-serif" font-size="12.8" font-weight="normal" font-style="normal" fill="#1a1a1a" textLength="60.0" lengthAdjust="spacingAndGlyphs" >Perspective</text>
<path d="M529 61.5 H537 M533 57.5 V65.5" stroke="#555" stroke-width="2.6"/><path d="M529.8 61.5 H536.2 M533 58.3 V64.7" stroke="#e8eef0" stroke-width="1"/>
<path d="M309.2 73.2 H395.8 V88.5 L393.5 90.8 H309.2 Z" fill="#82b38a"/>
<text x="317.5" y="86" font-family="Liberation Sans, sans-serif" font-size="12.5" font-weight="normal" font-style="normal" fill="#1a1a1a" textLength="60.0" lengthAdjust="spacingAndGlyphs" >Perspective</text>
<path d="M385.5 75 V90" stroke="#111" stroke-width="1.2"/><path d="M387.5 80.5 H394 L390.7 84.5 Z" fill="#111"/>
</g>
<g id="bracelet-perspective">
<path d="M373 131 L408 104" stroke="#1a1aff" stroke-width="1" fill="none"/>
<path d="M407 105 L1852 488" stroke="#0808ff" stroke-width="1" stroke-dasharray="3.2 0.9" fill="none"/>
<path d="M1852 488 L1839 537" stroke="#0808ff" stroke-width="1" stroke-dasharray="3.2 0.9" fill="none"/>
<path d="M1852 488 L1845 483.5 L1844 488.5 Z" fill="#1a1aff"/>
<text x="1040" y="272" font-family="Liberation Sans, sans-serif" font-size="10" fill="#3a3aff" transform="rotate(14.8 1040 272)" textLength="34" lengthAdjust="spacingAndGlyphs">179.39</text>
<use href="#plink" transform="translate(339.3 130) scale(0.85 0.94)"/>
<use href="#pstf" transform="translate(447 162) scale(0.828 0.934)"/>
<use href="#plink" transform="translate(447 162) scale(0.828 0.934)"/>
<use href="#pstf" transform="translate(553 192) scale(0.887 0.963)"/>
<use href="#plink" transform="translate(553 192) scale(0.887 0.963)"/>
<use href="#pstf" transform="translate(666.4 224.4) scale(0.920 0.980)"/>
<use href="#plink" transform="translate(666.4 224.4) scale(0.920 0.980)"/>
<use href="#pstm" transform="translate(785 254.3) scale(0.963 1.002)"/>
<use href="#plink" transform="translate(785 254.3) scale(0.963 1.002)"/>
<use href="#pstm" transform="translate(908.6 287.9) scale(1.000 1.020)"/>
<use href="#plink" transform="translate(908.6 287.9) scale(1.000 1.020)"/>
<use href="#pstm" transform="translate(1036.9 322.7) scale(1.012 1.026)"/>
<use href="#plink" transform="translate(1036.9 322.7) scale(1.012 1.026)"/>
<use href="#pstm" transform="translate(1167 357) scale(1.080 1.060)"/>
<use href="#plink" transform="translate(1167 357) scale(1.080 1.060)"/>
<use href="#pstm" transform="translate(1305 397) scale(1.145 1.093)"/>
<use href="#plink" transform="translate(1305 397) scale(1.145 1.093)"/>
<use href="#pstn" transform="translate(1452 437) scale(1.149 1.094)"/>
<use href="#plink" transform="translate(1452 437) scale(1.149 1.094)"/>
<use href="#plink" transform="translate(1600 475) scale(1.183 1.112)"/>
<path d="M1714.5 512.7 L1718 495.5 L1724 494 L1741 511 L1735.7 528 Z" fill="#2f8f46"/><path d="M1718 495.5 L1724 494 L1741 511 L1737 513 Z" fill="#3f9f58"/>
<path d="M1696 520 Q1706 514 1714 521 L1714 537 Q1704 540 1697 534 Z" fill="#3fae5a"/><path d="M1700 522 Q1707 519 1710 525 L1709 533 Q1703 535 1700 531 Z" fill="#ffffff"/>
<path d="M1714.5 524.3 L1741 535.8 L1741 554 L1711.5 546 Z" fill="#e0a018"/><path d="M1714.5 524.3 L1722 521 L1746 531 L1741 535.8 Z" fill="#f0b428"/>
<use href="#pstn" transform="translate(1600 475) scale(1.183 1.112)"/>
<use href="#pstc" transform="translate(1783 521) scale(1.218 1.129)"/>
</g>
<g fill="none" stroke="#f5a623" stroke-width=".8" transform="translate(1871 111)"><ellipse cx="0" cy="4" rx="17" ry="11" transform="rotate(22)"/><ellipse cx="-1.5" cy="5.5" rx="17" ry="11" transform="rotate(22)"/><ellipse cx="1.5" cy="2.8" rx="17" ry="11" transform="rotate(22)"/><ellipse cx="0" cy="-2" rx="16" ry="10" transform="rotate(22)"/><ellipse cx="-2" cy="6" rx="12" ry="6.5" transform="rotate(22)"/><path d="M-7 -16 L-1 -19 L5 -17 L6 -13 L-4 -7 L-7 -11 Z M-7 -16 L6 -13 M-1 -19 L-4 -7 M5 -17 L-7 -11" stroke="#2d62c8" stroke-width="1" fill="#bcd0f4"/></g>
<g id="label-text" font-family="Liberation Serif, serif" font-style="italic" fill="#000" stroke="#000" stroke-width=".6">
<text x="955" y="448.7" font-size="30" textLength="154" lengthAdjust="spacingAndGlyphs">ADR BC <tspan font-size="23">2</tspan></text>
<text x="973.5" y="484.4" font-size="31" textLength="93" lengthAdjust="spacingAndGlyphs"><tspan font-size="27" dy="5">7</tspan><tspan dy="-5"> inch</tspan></text>
<text x="935.5" y="513.3" font-size="31" textLength="169.5" lengthAdjust="spacingAndGlyphs"><tspan font-size="23">1</tspan><tspan font-size="27" dy="5">4</tspan><tspan dy="-5"> gm </tspan><tspan font-size="23">1</tspan><tspan font-size="29">8</tspan> kt</text>
</g>
<g id="metal-table">
<rect x="495" y="396.5" width="187.5" height="198.5" fill="#ffffff" />
<rect x="494.7" y="396.5" width="1.3" height="198.5" fill="#111" />
<rect x="625" y="397" width="1" height="20" fill="#e2e2e2" />
<rect x="681.5" y="397" width="1" height="198" fill="#dcdcdc" />
<rect x="496" y="594" width="186" height="1" fill="#d0d0d0" />
<text x="502.2" y="409.3" font-family="Liberation Sans, sans-serif" font-size="10.5" font-weight="normal" font-style="normal" fill="#1a1a1a" textLength="29.6" lengthAdjust="spacingAndGlyphs" >Metal</text>
<text x="631" y="409.3" font-family="Liberation Sans, sans-serif" font-size="10.5" font-weight="normal" font-style="normal" fill="#1a1a1a" textLength="35.7" lengthAdjust="spacingAndGlyphs" >Grams</text>
<rect x="496" y="417" width="129" height="15" fill="#23201d" />
<rect x="626" y="417" width="55.5" height="15" fill="#23201d" />
<text x="502.2" y="428.6" font-family="Liberation Sans, sans-serif" font-size="10.5" font-weight="normal" font-style="normal" fill="#ffffff" textLength="87.1" lengthAdjust="spacingAndGlyphs" >Yellow Gold:9KY</text>
<text x="631.7" y="428.6" font-family="Liberation Sans, sans-serif" font-size="10.5" font-weight="normal" font-style="normal" fill="#ffffff" textLength="31.3" lengthAdjust="spacingAndGlyphs" >12.62</text>
<rect x="496" y="433" width="129" height="15" fill="#23201d" />
<rect x="626" y="433" width="55.5" height="15" fill="#23201d" />
<text x="502.2" y="444.6" font-family="Liberation Sans, sans-serif" font-size="10.5" font-weight="normal" font-style="normal" fill="#ffffff" textLength="93.8" lengthAdjust="spacingAndGlyphs" >Yellow Gold:10KY</text>
<text x="631.7" y="444.6" font-family="Liberation Sans, sans-serif" font-size="10.5" font-weight="normal" font-style="normal" fill="#ffffff" textLength="31.3" lengthAdjust="spacingAndGlyphs" >13.04</text>
<rect x="496" y="449" width="129" height="15" fill="#23201d" />
<rect x="626" y="449" width="55.5" height="15" fill="#23201d" />
<text x="502.2" y="460.6" font-family="Liberation Sans, sans-serif" font-size="10.5" font-weight="normal" font-style="normal" fill="#ffffff" textLength="93.8" lengthAdjust="spacingAndGlyphs" >Yellow Gold:14KY</text>
<text x="631.7" y="460.6" font-family="Liberation Sans, sans-serif" font-size="10.5" font-weight="normal" font-style="normal" fill="#ffffff" textLength="31.3" lengthAdjust="spacingAndGlyphs" >14.67</text>
<rect x="496" y="465" width="129" height="15" fill="#23201d" />
<rect x="626" y="465" width="55.5" height="15" fill="#23201d" />
<text x="502.2" y="476.6" font-family="Liberation Sans, sans-serif" font-size="10.5" font-weight="normal" font-style="normal" fill="#ffffff" textLength="93.8" lengthAdjust="spacingAndGlyphs" >Yellow Gold:18KY</text>
<text x="631.7" y="476.6" font-family="Liberation Sans, sans-serif" font-size="10.5" font-weight="normal" font-style="normal" fill="#ffffff" textLength="31.3" lengthAdjust="spacingAndGlyphs" >17.55</text>
<rect x="496" y="481" width="129" height="15" fill="#23201d" />
<rect x="626" y="481" width="55.5" height="15" fill="#23201d" />
<text x="502.2" y="492.6" font-family="Liberation Sans, sans-serif" font-size="10.5" font-weight="normal" font-style="normal" fill="#ffffff" textLength="118.8" lengthAdjust="spacingAndGlyphs" >Yellow Gold:18KY R...</text>
<text x="631.7" y="492.6" font-family="Liberation Sans, sans-serif" font-size="10.5" font-weight="normal" font-style="normal" fill="#ffffff" textLength="31.3" lengthAdjust="spacingAndGlyphs" >17.55</text>
<rect x="496" y="497" width="129" height="15" fill="#23201d" />
<rect x="626" y="497" width="55.5" height="15" fill="#23201d" />
<text x="502.2" y="508.6" font-family="Liberation Sans, sans-serif" font-size="10.5" font-weight="normal" font-style="normal" fill="#ffffff" textLength="93.8" lengthAdjust="spacingAndGlyphs" >Yellow Gold:22KY</text>
<text x="631.7" y="508.6" font-family="Liberation Sans, sans-serif" font-size="10.5" font-weight="normal" font-style="normal" fill="#ffffff" textLength="31.3" lengthAdjust="spacingAndGlyphs" >20.38</text>
<rect x="496" y="513" width="129" height="15" fill="#23201d" />
<rect x="626" y="513" width="55.5" height="15" fill="#23201d" />
<text x="502.2" y="524.6" font-family="Liberation Sans, sans-serif" font-size="10.5" font-weight="normal" font-style="normal" fill="#ffffff" textLength="108.5" lengthAdjust="spacingAndGlyphs" >White Gold:9K PdW</text>
<text x="631.7" y="524.6" font-family="Liberation Sans, sans-serif" font-size="10.5" font-weight="normal" font-style="normal" fill="#ffffff" textLength="31.3" lengthAdjust="spacingAndGlyphs" >14.34</text>
<rect x="496" y="529" width="129" height="15" fill="#23201d" />
<rect x="626" y="529" width="55.5" height="15" fill="#23201d" />
<text x="502.2" y="540.6" font-family="Liberation Sans, sans-serif" font-size="10.5" font-weight="normal" font-style="normal" fill="#ffffff" textLength="99.8" lengthAdjust="spacingAndGlyphs" >White Gold:10KX1</text>
<text x="631.7" y="540.6" font-family="Liberation Sans, sans-serif" font-size="10.5" font-weight="normal" font-style="normal" fill="#ffffff" textLength="31.3" lengthAdjust="spacingAndGlyphs" >12.74</text>
<rect x="496" y="545" width="129" height="15" fill="#23201d" />
<rect x="626" y="545" width="55.5" height="15" fill="#23201d" />
<text x="502.2" y="556.6" font-family="Liberation Sans, sans-serif" font-size="10.5" font-weight="normal" font-style="normal" fill="#ffffff" textLength="97.8" lengthAdjust="spacingAndGlyphs" >White Gold:10KW</text>
<text x="631.7" y="556.6" font-family="Liberation Sans, sans-serif" font-size="10.5" font-weight="normal" font-style="normal" fill="#ffffff" textLength="31.3" lengthAdjust="spacingAndGlyphs" >12.52</text>
<rect x="496" y="561" width="129" height="15" fill="#23201d" />
<rect x="626" y="561" width="55.5" height="15" fill="#23201d" />
<text x="502.2" y="572.6" font-family="Liberation Sans, sans-serif" font-size="10.5" font-weight="normal" font-style="normal" fill="#ffffff" textLength="99.8" lengthAdjust="spacingAndGlyphs" >White Gold:14KX1</text>
<text x="631.7" y="572.6" font-family="Liberation Sans, sans-serif" font-size="10.5" font-weight="normal" font-style="normal" fill="#ffffff" textLength="31.3" lengthAdjust="spacingAndGlyphs" >14.36</text>
<rect x="496" y="577" width="129" height="15" fill="#23201d" />
<rect x="626" y="577" width="55.5" height="15" fill="#23201d" />
<text x="502.2" y="588.6" font-family="Liberation Sans, sans-serif" font-size="10.5" font-weight="normal" font-style="normal" fill="#ffffff" textLength="115.2" lengthAdjust="spacingAndGlyphs" >White Gold:14K PdW</text>
<text x="631.7" y="588.6" font-family="Liberation Sans, sans-serif" font-size="10.5" font-weight="normal" font-style="normal" fill="#ffffff" textLength="31.3" lengthAdjust="spacingAndGlyphs" >16.37</text>
</g>
<g id="gem-reporter">
<rect x="0" y="46" width="300" height="180.6" fill="#333333" />
<rect x="0" y="44" width="300" height="23" fill="url(#hdr)" />
<rect x="0" y="44" width="25" height="23" fill="#77746e" />
<rect x="2" y="44" width="19" height="21" fill="#2a80c4" />
<path d="M4 46 H9 M11 46 H14 M15.5 46 H18" stroke="#fff" stroke-width="1.1"/>
<path d="M4 48.5 H9 M11 48.5 H14 M15.5 48.5 H18" stroke="#fff" stroke-width="1.1"/>
<path d="M4 51 H9 M11 51 H14 M15.5 51 H18" stroke="#fff" stroke-width="1.1"/>
<path d="M4 58 H9 M11 58 H14 M15.5 58 H18" stroke="#fff" stroke-width="1.1"/>
<path d="M4 60.5 H9 M11 60.5 H14 M15.5 60.5 H18" stroke="#fff" stroke-width="1.1"/>
<path d="M4 63 H9 M11 63 H14 M15.5 63 H18" stroke="#fff" stroke-width="1.1"/>
<ellipse cx="11.5" cy="54.5" rx="6.5" ry="3.6" fill="#dfe8ee" transform="rotate(-15 11.5 54.5)"/>
<text x="30.5" y="53" font-family="Liberation Sans, sans-serif" font-size="11.5" font-weight="bold" font-style="normal" fill="#0a0a10" textLength="95.7" lengthAdjust="spacingAndGlyphs" >GEM REPORTER</text>
<path d="M146.5 45 V65" stroke="#6e6b66" stroke-width="1"/>
<rect x="282" y="47.5" width="13.5" height="13" fill="#c9c7c1" stroke="#8a8882" stroke-width="1"/>
<path d="M285 50.5 L292.5 57.5 M292.5 50.5 L285 57.5" stroke="#e8202a" stroke-width="1.2"/>
<rect x="0" y="66.5" width="300" height="1.5" fill="#4a4a48" />
<rect x="4.5" y="72.5" width="146.5" height="16" fill="#333" stroke="#1c1c1c" stroke-width="1"/>
<path d="M5 88.5 H151 V73" stroke="#555" stroke-width="1" fill="none"/>
<rect x="116" y="73.5" width="34.5" height="14.5" fill="#000" />
<text x="8.7" y="84.3" font-family="Liberation Sans, sans-serif" font-size="11.5" font-weight="normal" font-style="normal" fill="#ffffff" textLength="101.3" lengthAdjust="spacingAndGlyphs" >Total Gem Weight</text>
<text x="122.5" y="84.3" font-family="Liberation Sans, sans-serif" font-size="11.5" font-weight="normal" font-style="normal" fill="#19e6ff" textLength="20.8" lengthAdjust="spacingAndGlyphs" >5.26</text>
<rect x="154.5" y="72.5" width="140.5" height="16" fill="#333" stroke="#1c1c1c" stroke-width="1"/>
<path d="M155 88.5 H295 V73" stroke="#555" stroke-width="1" fill="none"/>
<rect x="260" y="73.5" width="34.5" height="14.5" fill="#000" />
<text x="158.7" y="84.3" font-family="Liberation Sans, sans-serif" font-size="11.5" font-weight="normal" font-style="normal" fill="#ffffff" textLength="96.3" lengthAdjust="spacingAndGlyphs" >Total Gem Count</text>
<text x="271.7" y="84.3" font-family="Liberation Sans, sans-serif" font-size="11.5" font-weight="normal" font-style="normal" fill="#19e6ff" textLength="11.1" lengthAdjust="spacingAndGlyphs" >77</text>
<path d="M37 98 H263" stroke="#1a1a1a" stroke-width="1"/><path d="M37 99 H263" stroke="#4a4a4a" stroke-width="1"/>
<circle cx="150" cy="98" r="6.6" fill="#2c2c2c"/><circle cx="150" cy="98" r="5" fill="#5a5a5a"/>
<path d="M146.5 99.5 L150 95.5 L153.5 99.5 Z" fill="#e8e4d8"/>
<rect x="42.5" y="107.5" width="49.5" height="15.5" fill="#333" stroke="#1c1c1c"/>
<path d="M43 123.5 H92.5" stroke="#555" fill="none"/>
<text x="45.3" y="120" font-family="Liberation Sans, sans-serif" font-size="11.5" font-weight="normal" font-style="normal" fill="#f4ecd8" textLength="39.7" lengthAdjust="spacingAndGlyphs" >Update</text>
<g><rect x="95" y="108" width="15.5" height="14.5" fill="url(#gbtn)"/><path d="M95 122.5 V108 H110.5" stroke="#7fd04a" stroke-width="1" fill="none"/><path d="M95 122.5 H110.5 V108" stroke="#2a6a10" stroke-width="1" fill="none"/><path d="M100.75 112.05 L105.35 115.25 L100.75 118.45 Z" fill="#f4f0d8"/></g>
<rect x="133.5" y="107.5" width="104.5" height="15.5" fill="#333" stroke="#1c1c1c"/>
<path d="M134 123.5 H238.5" stroke="#555" fill="none"/>
<text x="135.8" y="120" font-family="Liberation Sans, sans-serif" font-size="11.5" font-weight="normal" font-style="normal" fill="#f4ecd8" textLength="71.4" lengthAdjust="spacingAndGlyphs" >Save Report</text>
<g><rect x="241.2" y="108" width="15.5" height="14.5" fill="url(#gbtn)"/><path d="M241.2 122.5 V108 H256.7" stroke="#7fd04a" stroke-width="1" fill="none"/><path d="M241.2 122.5 H256.7 V108" stroke="#2a6a10" stroke-width="1" fill="none"/><path d="M246.95 112.05 L251.54999999999998 115.25 L246.95 118.45 Z" fill="#f4f0d8"/></g>
<rect x="2.5" y="127.5" width="290" height="99.1" fill="#555555"/><path d="M2.5 226.6 V127.5 H292.5 V226.6" stroke="#676767" stroke-width="1" fill="none"/>
<rect x="10.5" y="134.5" width="35" height="32" fill="#3a3a3a" stroke="#d8d8d8" stroke-width="1"/><ellipse cx="28.5" cy="154.0" rx="13.5" ry="9.5" fill="#161616"/><ellipse cx="27.5" cy="151.5" rx="13.5" ry="9.8" fill="#7a7ddc"/><ellipse cx="27.0" cy="149.5" rx="10" ry="6.5" fill="#6265cf"/><path d="M20.0 155.5 Q26.0 148.5 40.0 151.5 Q38.0 158.5 28.0 160.5 Q22.0 159.5 20.0 155.5Z" fill="#ffffff"/><path d="M32.0 147.5 L41.0 149.5 L39.0 154.5 Z" fill="#b9c6f6"/>
<rect x="46" y="134.5" width="118.5" height="15.5" fill="#343434" stroke="#7c7c7c" stroke-width="1"/>
<rect x="165" y="134.5" width="101.5" height="15.5" fill="#343434" stroke="#7c7c7c" stroke-width="1"/>
<rect x="46" y="150.5" width="118.5" height="16" fill="#343434" stroke="#7c7c7c" stroke-width="1"/>
<rect x="165" y="150.5" width="35.5" height="16" fill="#343434" stroke="#7c7c7c" stroke-width="1"/>
<rect x="201" y="150.5" width="48" height="16" fill="#343434" stroke="#7c7c7c" stroke-width="1"/>
<text x="90.5" y="145.8" font-family="Liberation Sans, sans-serif" font-size="11.5" font-weight="normal" font-style="normal" fill="#f6ecd6" textLength="34.8" lengthAdjust="spacingAndGlyphs" >Round</text>
<text x="191.7" y="145.8" font-family="Liberation Sans, sans-serif" font-size="11.5" font-weight="normal" font-style="normal" fill="#f6ecd6" textLength="49.6" lengthAdjust="spacingAndGlyphs" >Diamond</text>
<text x="73.7" y="161.8" font-family="Liberation Sans, sans-serif" font-size="11.5" font-weight="normal" font-style="normal" fill="#f6ecd6" textLength="65.0" lengthAdjust="spacingAndGlyphs" >1.60 X 1.60</text>
<text x="176.3" y="161.8" font-family="Liberation Sans, sans-serif" font-size="11.5" font-weight="normal" font-style="normal" fill="#f6ecd6" textLength="13.4" lengthAdjust="spacingAndGlyphs" >66</text>
<text x="207.5" y="161.8" font-family="Liberation Sans, sans-serif" font-size="11.5" font-weight="normal" font-style="normal" fill="#f6ecd6" textLength="37.2" lengthAdjust="spacingAndGlyphs" >1.02tw</text>
<g><rect x="249.5" y="151.0" width="17" height="15.5" fill="url(#gbtn)"/><path d="M249.5 166.5 V151.0 H266.5" stroke="#7fd04a" stroke-width="1" fill="none"/><path d="M249.5 166.5 H266.5 V151.0" stroke="#2a6a10" stroke-width="1" fill="none"/><path d="M256.0 155.55 L260.6 158.75 L256.0 161.95 Z" fill="#f4f0d8"/></g>
<rect x="10.5" y="170.5" width="35" height="32" fill="#3a3a3a" stroke="#d8d8d8" stroke-width="1"/><ellipse cx="28.5" cy="190.0" rx="14" ry="9" fill="#161616" transform="rotate(-28 28.0 186.5)"/><ellipse cx="27.5" cy="187.0" rx="14.5" ry="9.3" fill="#7a7ddc" transform="rotate(-28 28.0 186.5)"/><ellipse cx="27.0" cy="184.5" rx="10.5" ry="6" fill="#6265cf" transform="rotate(-28 28.0 186.5)"/><path d="M19.0 195.5 Q22.0 188.5 34.0 185.5 L39.0 187.5 Q34.0 195.5 24.0 197.5 Z" fill="#ffffff"/><path d="M30.0 182.5 L40.0 180.5 L39.0 187.5 L33.0 186.5 Z" fill="#cfe0fb"/>
<rect x="46" y="170.5" width="118.5" height="15.5" fill="#343434" stroke="#7c7c7c" stroke-width="1"/>
<rect x="165" y="170.5" width="101.5" height="15.5" fill="#343434" stroke="#7c7c7c" stroke-width="1"/>
<rect x="46" y="186.5" width="118.5" height="16" fill="#343434" stroke="#7c7c7c" stroke-width="1"/>
<rect x="165" y="186.5" width="35.5" height="16" fill="#343434" stroke="#7c7c7c" stroke-width="1"/>
<rect x="201" y="186.5" width="48" height="16" fill="#343434" stroke="#7c7c7c" stroke-width="1"/>
<text x="95.3" y="181.8" font-family="Liberation Sans, sans-serif" font-size="11.5" font-weight="normal" font-style="normal" fill="#f6ecd6" textLength="25.0" lengthAdjust="spacingAndGlyphs" >Oval</text>
<text x="191.7" y="181.8" font-family="Liberation Sans, sans-serif" font-size="11.5" font-weight="normal" font-style="normal" fill="#f6ecd6" textLength="49.6" lengthAdjust="spacingAndGlyphs" >Diamond</text>
<text x="73.7" y="197.8" font-family="Liberation Sans, sans-serif" font-size="11.5" font-weight="normal" font-style="normal" fill="#f6ecd6" textLength="65.0" lengthAdjust="spacingAndGlyphs" >6.00 X 4.00</text>
<text x="176.7" y="197.8" font-family="Liberation Sans, sans-serif" font-size="11.5" font-weight="normal" font-style="normal" fill="#f6ecd6" textLength="12.3" lengthAdjust="spacingAndGlyphs" >11</text>
<text x="207" y="197.8" font-family="Liberation Sans, sans-serif" font-size="11.5" font-weight="normal" font-style="normal" fill="#f6ecd6" textLength="37.7" lengthAdjust="spacingAndGlyphs" >4.24tw</text>
<g><rect x="249.5" y="187.0" width="17" height="15.5" fill="url(#gbtn)"/><path d="M249.5 202.5 V187.0 H266.5" stroke="#7fd04a" stroke-width="1" fill="none"/><path d="M249.5 202.5 H266.5 V187.0" stroke="#2a6a10" stroke-width="1" fill="none"/><path d="M256.0 191.55 L260.6 194.75 L256.0 197.95 Z" fill="#f4f0d8"/></g>
</g>
<rect x="0" y="226.6" width="490" height="552.4" fill="#ffffff" />
<g id="detail-top">
<rect x="0" y="226.6" width="490" height="285" fill="#ffffff"/>
<path d="M50 294.7 H273 M50 483.5 H273 M236 324 H467 M236 454.6 H467" stroke="#aab2ff" stroke-width="1"/>
<circle cx="-2" cy="312" r="11" fill="url(#dball)"/><circle cx="-2" cy="457" r="11" fill="url(#dball)"/>
<path d="M82 305 L125 320 L125 350 L100 345 Z M82 471 L125 456 L125 426 L100 431 Z" fill="#123c2c"/>
<path d="M100 335 L165 350 L215 388 L165 428 L100 442 Z" fill="#2a7a5c"/>
<ellipse cx="40" cy="389" rx="63" ry="94.5" fill="url(#bigoval)"/>
<g stroke="#1d50d2" stroke-width="1" fill="none" opacity=".9"><ellipse cx="40" cy="389" rx="62.5" ry="94"/><path d="M40 295 L-5 340 L-12 389 L-5 438 L40 483 L85 438 L92 389 L85 340 Z"/><path d="M40 295 L20 330 L-22 365 M40 295 L60 330 L102 365 M40 483 L20 448 L-22 413 M40 483 L60 448 L102 413"/><path d="M20 330 L60 330 L85 340 L76 389 L85 438 L60 448 L20 448 L-5 438 L4 389 L-5 340 Z"/><path d="M4 389 L40 340 L76 389 L40 438 Z M40 340 V438 M4 389 H76"/><path d="M-23 389 L20 330 M103 389 L60 330 M-23 389 L20 448 M103 389 L60 448"/><path d="M92 389 L103 389 M85 340 L96 330 M85 438 L96 448 M60 330 L70 302 M60 448 L70 476 M20 330 L10 302 M20 448 L10 476"/></g>
<circle cx="127" cy="358" r="23" fill="url(#dsst)" stroke="#5f8fe6" stroke-width="1"/>
<g stroke="#6f9aea" stroke-width=".8" fill="none" opacity=".9"><circle cx="127" cy="358" r="17"/><circle cx="127" cy="358" r="10"/><path d="M104 358 H150 M127 335 V381 M111 342 L143 374 M111 374 L143 342 M106 349 L148 367 M106 367 L148 349 M118 337 L136 379 M136 337 L118 379"/></g>
<circle cx="127" cy="418" r="23" fill="url(#dsst)" stroke="#5f8fe6" stroke-width="1"/>
<g stroke="#6f9aea" stroke-width=".8" fill="none" opacity=".9"><circle cx="127" cy="418" r="17"/><circle cx="127" cy="418" r="10"/><path d="M104 418 H150 M127 395 V441 M111 402 L143 434 M111 434 L143 402 M106 409 L148 427 M106 427 L148 409 M118 397 L136 439 M136 397 L118 439"/></g>
<circle cx="176" cy="388.7" r="23" fill="url(#dsst)" stroke="#5f8fe6" stroke-width="1"/>
<g stroke="#6f9aea" stroke-width=".8" fill="none" opacity=".9"><circle cx="176" cy="388.7" r="17"/><circle cx="176" cy="388.7" r="10"/><path d="M153 388.7 H199 M176 365.7 V411.7 M160 372.7 L192 404.7 M160 404.7 L192 372.7 M155 379.7 L197 397.7 M155 397.7 L197 379.7 M167 367.7 L185 409.7 M185 367.7 L167 409.7"/></g>
<circle cx="95" cy="314.6" r="13" fill="url(#dball)"/>
<circle cx="123" cy="327" r="11" fill="url(#dball)"/>
<circle cx="161.8" cy="358" r="10.5" fill="url(#dball)"/>
<circle cx="115" cy="388" r="10.5" fill="url(#dball)"/>
<circle cx="146" cy="388" r="10.5" fill="url(#dball)"/>
<circle cx="208.5" cy="388.7" r="10.5" fill="url(#dball)"/>
<circle cx="161.8" cy="418" r="10.5" fill="url(#dball)"/>
<circle cx="123" cy="449" r="11" fill="url(#dball)"/>
<circle cx="93" cy="461.8" r="13" fill="url(#dball)"/>
<use href="#xring"/><use href="#xlink"/>
<path d="M258 297.5 L250.5 326 L265.5 326 Z" fill="#0000ff"/>
<path d="M258 481 L250.5 452 L265.5 452 Z" fill="#0000ff"/>
<text x="251.4" y="429.5" font-family="Liberation Sans, sans-serif" font-size="42" fill="#0000ff" textLength="84" lengthAdjust="spacingAndGlyphs" transform="rotate(-90 251.4 429.5)">6.00</text>
<path d="M452 324 V454.6" stroke="#2a2aff" stroke-width="1"/>
<path d="M452 326 L445.5 354.5 L458.5 354.5 Z" fill="#0000ff"/>
<path d="M452 453 L445.5 426 L458.5 426 Z" fill="#0000ff"/>
<text x="445.5" y="431" font-family="Liberation Sans, sans-serif" font-size="42" fill="#0000ff" textLength="84" lengthAdjust="spacingAndGlyphs" transform="rotate(-90 445.5 431)">4.20</text>
<path d="M1.5 470 V486.5 H23" stroke="#b0b0b0" stroke-width="1" fill="none"/><path d="M23.5 484.5 l3 3 m0 -3 l-3 3" stroke="#e02020" stroke-width=".9"/>
<path d="M4 466 v6" stroke="#30a0d0" stroke-width="1.5"/>
<g fill="none" stroke="#f5a623" stroke-width=".8" transform="translate(479 247.5)"><ellipse cx="0" cy="0" rx="11" ry="4"/><ellipse cx="0" cy="0" rx="11.5" ry="2.6"/><ellipse cx="0" cy="0" rx="9" ry="4.6"/><path d="M-3.5 -3 H3.5 L5 -.5 L0 8 L-5 -.5 Z M-5 -.5 H5 M0 -3 V8 M-2 -3 L0 8 L2 -3" stroke="#2d62c8" stroke-width=".7" fill="#dfe8fb"/></g>
<rect x="0" y="510.8" width="490" height="1.4" fill="#2a2a2a"/><rect x="0" y="512.2" width="490" height="1" fill="#b8bcc0"/>
</g>
<g id="detail-side">
<rect x="0" y="513.2" width="490" height="265.8" fill="#ffffff"/>
<rect x="0" y="514.6" width="14.6" height="11.8" fill="#82b38a"/><path d="M2 520.5 h1.5 M9 520.5 h3" stroke="#222" stroke-width="1"/>
<g fill="none" stroke="#f5a623" stroke-width=".8" transform="translate(479 540.5)"><circle r="11"/><circle r="10"/><circle r="11.6" stroke-dasharray="2 1"/><path d="M-4 -19 H4 L5.5 -17 L0 -12 L-5.5 -17 Z M-5.5 -17 H5.5 M0 -19 V-12" stroke="#2d62c8" stroke-width=".7" fill="#dfe8fb"/></g>
<path d="M107 611 H427 M256 667.4 H479" stroke="#8e96ff" stroke-width="1"/>
<path d="M0 653.4 H100 V686.2 H0 Z" fill="url(#dbar)"/>
<path d="M0 708.4 H100 V726.8 Q50 724.5 0 727.5 Z" fill="url(#dbar)"/>
<path d="M100 664 L190 672 V690 L100 686 Z" fill="url(#dbar)"/><path d="M100 708 H190 V733 L100 727 Z" fill="url(#dbar)"/>
<path d="M30 611 H83 L86 620 L81 653.4 H29 L24 620 Z" fill="#10328a"/>
<path d="M24 620 L86 620 L81 653.4 H29 Z" fill="#0e2e80"/>
<g stroke="#1d50d2" stroke-width=".9" fill="none"><path d="M30 611 L40 630 L56 614 L70 632 L83 611 M24 620 L40 630 L45 653 M86 620 L70 632 L68 653 M40 630 L56 650 L70 632 M56 614 V650 M30 611 L56 625 L83 611 M24 620 H86 M35 653 L48 620 L56 653 L64 620 L76 653"/></g>
<path d="M30 640 L40 628 L52 653 L36 653 Z" fill="#3a5fb0" opacity=".55"/>
<path d="M105 653 L142 653 L142 660 L128 671 L112 665 Z" fill="#8fb8f0" stroke="#6f9aea" stroke-width=".8"/>
<path d="M157 658 L180 657 L181 666 L170 677 L158 672 Z" fill="#8fb8f0" stroke="#6f9aea" stroke-width=".8"/>
<g stroke="#5f8fe6" stroke-width=".7" fill="none"><path d="M128 656 l4 8 l4 -8 l3 7 M160 662 l4 8 l4 -8 l4 8 l3 -8"/></g>
<path d="M0 652 L6 658 L0 664 Z" fill="#8fb6ee"/>
<path d="M105 638 L116 638 L116 690 L105 690 Z" fill="url(#dcyl)" stroke="#1a8a5c" stroke-width=".6"/><ellipse cx="110.5" cy="638" rx="5.5" ry="1.65" fill="#2f7d60" stroke="#1a8a5c" stroke-width=".5"/>
<path d="M130 641.8 L144 641.8 L144 690 L130 690 Z" fill="url(#dcyl)" stroke="#1a8a5c" stroke-width=".6"/><ellipse cx="137.0" cy="641.8" rx="7.0" ry="2.1" fill="#2f7d60" stroke="#1a8a5c" stroke-width=".5"/>
<path d="M-6 638 L4.5 638 L8 727 L-2 727 Z" fill="url(#dcyl)" stroke="#1a8a5c" stroke-width=".6"/><ellipse cx="-0.75" cy="638" rx="5.25" ry="1.575" fill="#2f7d60" stroke="#1a8a5c" stroke-width=".5"/>
<path d="M2.9 596.4 L23.2 596.4 L28 727 L9 727 Z" fill="url(#dcyl)" stroke="#1a8a5c" stroke-width=".6"/><ellipse cx="13.049999999999999" cy="596.4" rx="10.15" ry="3.045" fill="#2f7d60" stroke="#1a8a5c" stroke-width=".5"/>
<path d="M86 596.4 L106.6 596.4 L100 727 L78 727 Z" fill="url(#dcyl)" stroke="#1a8a5c" stroke-width=".6"/><ellipse cx="96.3" cy="596.4" rx="10.299999999999997" ry="3.089999999999999" fill="#2f7d60" stroke="#1a8a5c" stroke-width=".5"/>
<path d="M111 639 L128.4 639 L121.7 727 L101 727 Z" fill="url(#dcyl)" stroke="#1a8a5c" stroke-width=".6"/><ellipse cx="119.7" cy="639" rx="8.700000000000003" ry="2.6100000000000008" fill="#2f7d60" stroke="#1a8a5c" stroke-width=".5"/>
<path d="M143 642.8 L160.3 642.8 L150.6 729 L135 729 Z" fill="url(#dcyl)" stroke="#1a8a5c" stroke-width=".6"/><ellipse cx="151.65" cy="642.8" rx="8.650000000000006" ry="2.5950000000000015" fill="#2f7d60" stroke="#1a8a5c" stroke-width=".5"/>
<path d="M181.5 648 L198 648 L198 700 L181.5 700 Z" fill="url(#dcyl)" stroke="#1a8a5c" stroke-width=".6"/><ellipse cx="189.75" cy="648" rx="8.25" ry="2.475" fill="#2f7d60" stroke="#1a8a5c" stroke-width=".5"/>
<path d="M149.7 695.9 L227.9 661.1 Q240 657.5 251 659.2 Q266 661 280 665 L342.8 695.9 L246.2 678.5 Z" fill="url(#dtop)" stroke="#1a8a5c" stroke-width=".6"/>
<path d="M149.7 695.9 L246.2 678.5 L246.2 713.3 L190.2 734.5 L149.7 730.6 Z" fill="url(#dfaceL)" stroke="#1a8a5c" stroke-width=".6"/>
<path d="M246.2 678.5 Q262 672 275 675 L342.8 700 V731.6 L246.2 713.3 Z" fill="url(#dfaceR)" stroke="#1a8a5c" stroke-width=".6"/>
<path d="M246.2 678.5 Q262 672 275 675 L342.8 700 L342.8 695.9 L280 668 Q262 664 246.2 678.5 Z" fill="#0f4632"/>
<path d="M149.7 714 L246.2 684.5 M149.7 717 L246.2 687.5 M246.2 694 L342.8 714 M246.2 697 L342.8 717" stroke="#1a8a5c" stroke-width=".9" fill="none"/>
<path d="M134 726.2 H427" stroke="#0000ff" stroke-width="1.1"/>
<path d="M349 729.5 H479" stroke="#8e96ff" stroke-width="1"/>
<path d="M149.7 722 L149.7 730.6 L190.2 734.5 L246.2 713.3 L342.8 731.6 V722 L246.2 703.5 L190 724.5 Z" fill="#2a7659"/>
<path d="M415.7 611 V726" stroke="#0000ff" stroke-width="1"/>
<path d="M415.7 612 L409 637 H422.4 Z M415.7 726 L409 701.5 H422.4 Z" fill="#0000ff"/>
<text x="409.1" y="703.5" font-family="Liberation Sans, sans-serif" font-size="32.5" fill="#0000ff" textLength="68.5" lengthAdjust="spacingAndGlyphs" transform="rotate(-90 409.1 703.5)">4.54</text>
<path d="M466.7 665 L461 642.5 H472.4 Z M466.7 733.5 L461 755 H472.4 Z" fill="#0000ff"/>
<text x="460.5" y="731.5" font-family="Liberation Sans, sans-serif" font-size="32.5" fill="#0000ff" textLength="66" lengthAdjust="spacingAndGlyphs" transform="rotate(-90 460.5 731.5)">2.44</text>
<path d="M2 760 V779" stroke="#f0c090" stroke-width="1.2"/><path d="M4 758 h3 l-2 3" stroke="#e0a020" stroke-width="1" fill="none"/><path d="M26 777 v2 M28 777 v2" stroke="#c02020" stroke-width=".9"/>
</g>
<rect x="0" y="226.6" width="8.5" height="5.4" fill="#c3cbd2"/><rect x="1.8" y="226.6" width="1" height="5.4" fill="#6a7076"/>
<g id="bottom-overlay">
<rect x="490" y="634" width="1421" height="12" fill="url(#shT)" />
<rect x="490" y="646" width="1416" height="286" fill="#ffffff" />
<rect x="1906" y="648" width="5" height="284" fill="url(#shR)" />
<rect x="1886" y="654" width="19" height="19" fill="#e4e4e4" />
<path d="M1892.5 660.5 l6 6 m0 -6 l-6 6" stroke="#f4f4f4" stroke-width="1.6"/>
<g fill="none" stroke="#f5a623" stroke-width=".9" transform="translate(1866 717)"><ellipse cx="0" cy="0" rx="18.5" ry="6.5"/><ellipse cx="0" cy="0" rx="19" ry="4.3"/><ellipse cx="0" cy="0" rx="15" ry="7.3"/><ellipse cx="0" cy="0" rx="17" ry="5.5"/><path d="M-4.5 -6 H4.5 L7 -2 L0 12 L-7 -2 Z M-7 -2 H7 M0 -6 V12 M-2.5 -6 L0 12 L2.5 -6" stroke="#2d62c8" stroke-width=".8" fill="#dfe8fb"/></g>
</g>
<rect x="0" y="779" width="300" height="153" fill="#333333" />
<rect x="300" y="779" width="2" height="153" fill="#ececec" />
<rect x="302" y="779" width="6.5" height="153" fill="#b2b2b2" />
<rect x="308" y="779" width="1.2" height="153" fill="#3a3a3a" />
<linearGradient id="dv" x1="0" y1="0" x2="1" y2="0"><stop offset="0" stop-color="#e4e4e4"/><stop offset="1" stop-color="#ffffff"/></linearGradient>
<rect x="309.2" y="779" width="8.5" height="153" fill="url(#dv)" />
<g id="bracelet-top">
<path d="M323.5 779.5 H1902.5 M323.5 779.5 V838 M1902.5 775 V850" stroke="#2a2aff" stroke-width="1" fill="none"/>
<path d="M1902 779.5 L1894 777.5 V781.5 Z M324 779.5 L332 777.8 V781.2 Z" fill="#1a1aff"/>
<text x="1096" y="777" font-family="Liberation Sans, sans-serif" font-size="10.5" fill="#2a2aff" textLength="36" lengthAdjust="spacingAndGlyphs">179.39</text>
<use href="#tlinkr" transform="translate(359.2 855.3)"/>
<use href="#tlink" transform="translate(499.2 855.3)"/>
<use href="#tlink" transform="translate(639.3 855.3)"/>
<use href="#tlink" transform="translate(779.3 855.3)"/>
<use href="#tlink" transform="translate(919.3 855.3)"/>
<use href="#tlink" transform="translate(1059.3 855.3)"/>
<use href="#tlink" transform="translate(1199.4 855.3)"/>
<use href="#tlink" transform="translate(1339.4 855.3)"/>
<use href="#tlink" transform="translate(1479.4 855.3)"/>
<use href="#tlink" transform="translate(1619.5 855.3)"/>
<use href="#tlink" transform="translate(1759.5 855.3)"/>
<rect x="1800" y="841" width="36" height="28.5" fill="#f6f26a"/>
<path d="M1793 844.3 Q1774 855.3 1793 866.3 Z" fill="#7fdc8e" stroke="#1a8a5a" stroke-width="1.4"/>
<rect x="1792.5" y="845" width="33.5" height="21" fill="#2e8b47"/>
<use href="#tst" transform="translate(429.2 855.3)"/>
<use href="#tst" transform="translate(569.2 855.3)"/>
<use href="#tst" transform="translate(709.3 855.3)"/>
<use href="#tst" transform="translate(849.3 855.3)"/>
<use href="#tst" transform="translate(989.3 855.3)"/>
<use href="#tst" transform="translate(1129.3 855.3)"/>
<use href="#tst" transform="translate(1269.4 855.3)"/>
<use href="#tst" transform="translate(1409.4 855.3)"/>
<use href="#tst" transform="translate(1549.4 855.3)"/>
<use href="#tst" transform="translate(1689.5 855.3)"/>
<use href="#tst" transform="translate(1851.4 855.3)"/>
</g>
</svg></body></html>
